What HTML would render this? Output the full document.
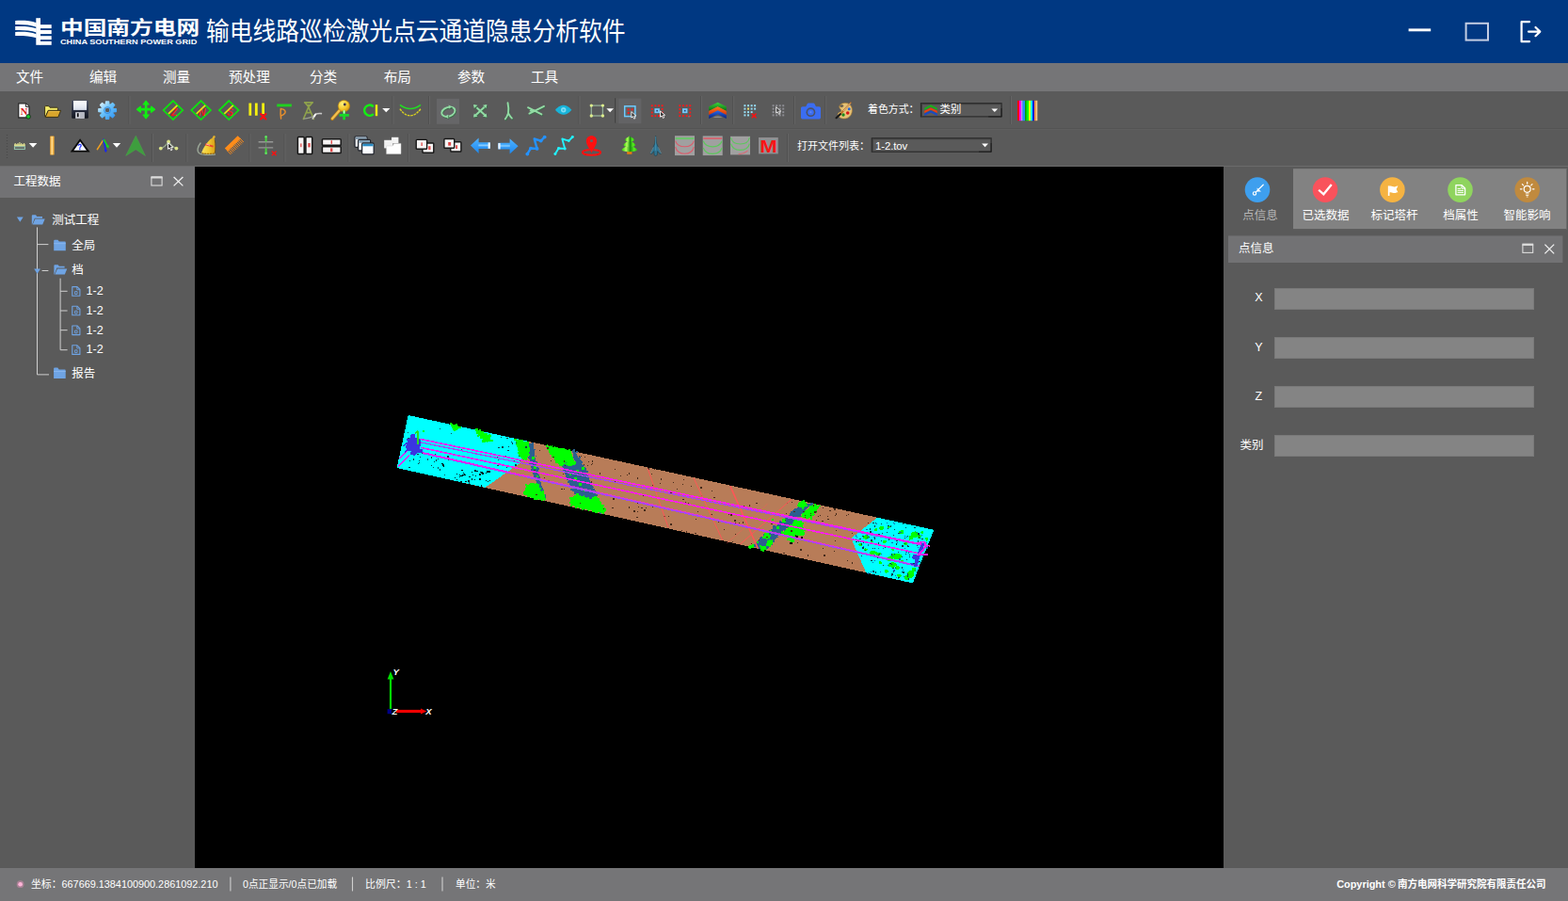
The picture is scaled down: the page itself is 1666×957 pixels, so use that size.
<!DOCTYPE html>
<html lang="zh-CN">
<head>
<meta charset="utf-8">
<title>输电线路巡检激光点云通道隐患分析软件</title>
<style>
html,body{margin:0;padding:0;background:#5a5a5a;}
body{width:1666px;height:957px;overflow:hidden;font-family:"Liberation Sans",sans-serif;color:#fff;}
#app{position:relative;width:1666px;height:957px;overflow:hidden;background:#5a5a5a;}
#app div,#app span,#app svg{box-sizing:border-box;}
.abs{position:absolute;}
.lb{position:absolute;display:block;line-height:1;overflow:hidden;white-space:nowrap;}
.lb .tt{position:absolute;left:1px;top:0.1em;color:#fff;white-space:nowrap;font-family:"Liberation Sans","Noto Sans CJK SC",sans-serif;transform-origin:0 0;}
.lt{position:absolute;white-space:nowrap;line-height:1;color:#fff;}
#titlebar{position:absolute;left:0;top:0;width:1666px;height:67px;background:#003882;}
#menubar{position:absolute;left:0;top:67px;width:1666px;height:30px;background:#757577;}
#tb1{position:absolute;left:0;top:97px;width:1666px;height:40px;background:#5a5a5a;border-bottom:1px solid #535353;}
#tb2{position:absolute;left:0;top:137px;width:1666px;height:40px;background:#5a5a5a;border-top:1px solid #5e5e5e;border-bottom:1px solid #6b6b6b;}
#tb1 svg.ic,#tb2 svg.ic{position:absolute;left:0;top:0;}
#left{position:absolute;left:0;top:177px;width:207px;height:745px;background:#5a5a5a;}
#left .hd{position:absolute;left:0;top:0;width:207px;height:33px;background:#727274;}
#view{position:absolute;left:207px;top:177px;width:1093px;height:745px;background:#000;}
#right{position:absolute;left:1300px;top:177px;width:366px;height:745px;background:#5a5a5a;}
#status{position:absolute;left:0;top:922px;width:1666px;height:35px;background:#757577;}

</style>
</head>
<body>
<div id="app">
<div id="titlebar">
<svg class="abs" style="left:10px;top:14px" width="52" height="40" viewBox="10 14 52 40">
<g fill="#fff">
<rect x="38.3" y="19.2" width="4.7" height="28.6"/>
<rect x="42.5" y="26.2" width="12.2" height="3.9"/>
<rect x="42.5" y="32" width="12.2" height="4.1"/>
<rect x="42.5" y="38.2" width="12.2" height="3.9"/>
<rect x="42.5" y="43.9" width="12.2" height="3.9"/>
<path d="M16.2 22 C24 21.6 32 21.8 38.8 24.2 L38.8 28.8 C32 26.2 24 25.8 16.2 26 Z"/>
<path d="M16.2 28.1 C24 27.7 32 27.9 38.8 30.3 L38.8 34.6 C32 32.2 24 31.8 16.2 32.1 Z"/>
<path d="M16.2 34 C24 33.6 32 33.8 38.8 36.3 L38.8 40.3 C32 38.2 24 37.8 16.2 38 Z"/>
</g></svg>
<span class="lb" style="left:62.7px;top:18px;width:150.2px;height:26.4px;font-size:20.3px"><span class="tt" style="font-weight:bold;transform:scaleX(1.217)">中国南方电网</span></span>
<span class="lb" style="left:63.1px;top:41.2px;width:148.2px;height:9px;font-size:6.9px"><span class="tt" style="font-weight:bold;transform:scaleX(1.33)">CHINA SOUTHERN POWER GRID</span></span>
<span class="lb" style="left:218.2px;top:17.3px;width:472.4px;height:36.1px;font-size:27.8px"><span class="tt" style="transform:scaleX(0.8906)">输电线路巡检激光点云通道隐患分析软件</span></span>
<svg class="abs" style="left:1490px;top:16px" width="160" height="36" viewBox="1490 16 160 36">
<rect x="1496.6" y="30.4" width="23.6" height="2.9" fill="#fff"/>
<rect x="1557.6" y="24.8" width="23.4" height="17.8" fill="none" stroke="#c3cde3" stroke-width="2"/>
<path d="M1625 23.2 H1616.6 V44.2 H1625" fill="none" stroke="#fff" stroke-width="2.2" stroke-linejoin="round" stroke-linecap="round"/>
<path d="M1624 33.6 H1636 M1631.5 29 L1636.3 33.6 L1631.5 38.2" fill="none" stroke="#fff" stroke-width="2.2" stroke-linecap="round" stroke-linejoin="round"/>
</svg>
</div>
<div id="menubar">
<span class="lb" style="left:16px;top:6.5px;width:31.1px;height:18.9px;font-size:14.6px"><span class="tt">文件</span></span>
<span class="lb" style="left:94px;top:6.5px;width:31.1px;height:18.9px;font-size:14.6px"><span class="tt">编辑</span></span>
<span class="lb" style="left:171.9px;top:6.5px;width:31.1px;height:18.9px;font-size:14.6px"><span class="tt">测量</span></span>
<span class="lb" style="left:242px;top:6.5px;width:45.7px;height:18.9px;font-size:14.6px"><span class="tt">预处理</span></span>
<span class="lb" style="left:328px;top:6.5px;width:31.1px;height:18.9px;font-size:14.6px"><span class="tt">分类</span></span>
<span class="lb" style="left:406.7px;top:6.5px;width:31.1px;height:18.9px;font-size:14.6px"><span class="tt">布局</span></span>
<span class="lb" style="left:485px;top:6.5px;width:31.1px;height:18.9px;font-size:14.6px"><span class="tt">参数</span></span>
<span class="lb" style="left:563px;top:6.5px;width:31.1px;height:18.9px;font-size:14.6px"><span class="tt">工具</span></span>
</div>
<div id="tb1">
<svg class="ic" width="1666" height="40" viewBox="0 97 1666 40">
<path d="M19.7 109.9H27.6L31 113.2V125H19.7Z" fill="#fff" stroke="#2c2c2c" stroke-width="1.3" stroke-linejoin="round"/><path d="M27.4 110V113.4H30.8" fill="#e8e8e8" stroke="#2c2c2c" stroke-width="1"/><text x="25.6" y="122.2" font-family="Liberation Serif, serif" font-weight="bold" font-size="10.5" fill="#d81818" text-anchor="middle">N</text><circle cx="30.1" cy="123.9" r="2.3" fill="#10c828" stroke="#1c2a1c" stroke-width="0.9"/>
<path d="M47.6 123.6V113.6Q47.6 112.6 48.6 112.6H51Q52 112.6 52.6 113.6L53 114.2H60.4Q61.4 114.2 61.4 115.2V117.4H51.4L48.4 124Z" fill="#f4ec6a" stroke="#3a3216" stroke-width="1"/><path d="M48.2 124.4L51.2 117.4H64.6L61.8 124.4Z" fill="#d9a62c" stroke="#3a3216" stroke-width="1" stroke-linejoin="round"/><path d="M51.8 118.4H63.2" stroke="#f0c44c" stroke-width="0.9"/>
<defs><linearGradient id="flg" x1="0" y1="0" x2="0" y2="1"><stop offset="0" stop-color="#fdfdff"/><stop offset="1" stop-color="#d9dfec"/></linearGradient><linearGradient id="fbg" x1="0" y1="0" x2="0" y2="1"><stop offset="0" stop-color="#4a5064"/><stop offset="0.5" stop-color="#2a3042"/><stop offset="1" stop-color="#12151e"/></linearGradient></defs>
<rect x="76.2" y="106.6" width="17.7" height="19.2" rx="1" fill="url(#fbg)"/><rect x="78" y="107" width="14.1" height="9.9" fill="url(#flg)"/><rect x="80.2" y="119.2" width="9.4" height="6.6" fill="#d4d6dc"/><rect x="85" y="119.2" width="4.6" height="6.6" fill="#b6b9c2"/><rect x="81.9" y="120.2" width="1.7" height="4" fill="#0a0a0e"/>
<defs><linearGradient id="gg" x1="0" y1="0" x2="1" y2="1"><stop offset="0" stop-color="#f4fcff"/><stop offset="0.45" stop-color="#6cc4fa"/><stop offset="1" stop-color="#2a8ef0"/></linearGradient></defs>
<path d="M112.66 107.91L115.54 107.91L115.78 111.03L117.21 111.62L119.58 109.59L121.61 111.62L119.58 113.99L120.17 115.42L123.29 115.66L123.29 118.54L120.17 118.78L119.58 120.21L121.61 122.58L119.58 124.61L117.21 122.58L115.78 123.17L115.54 126.29L112.66 126.29L112.42 123.17L110.99 122.58L108.62 124.61L106.59 122.58L108.62 120.21L108.03 118.78L104.91 118.54L104.91 115.66L108.03 115.42L108.62 113.99L106.59 111.62L108.62 109.59L110.99 111.62L112.42 111.03Z M117.1 117.1A3 3 0 1 0 111.1 117.1A3 3 0 1 0 117.1 117.1Z" fill="url(#gg)" fill-rule="evenodd" stroke="url(#gg)" stroke-width="1.5" stroke-linejoin="round"/>
<circle cx="114.1" cy="117.1" r="3.4" fill="none" stroke="#2e86e0" stroke-width="0.9"/>
<path d="M137 102V132" stroke="#515151" stroke-width="1"/><path d="M138 102V132" stroke="#646464" stroke-width="1"/>
<g fill="#12ee12" stroke="#12ee12" stroke-linejoin="round"><path d="M155.1 109V124M147.4 116.2H162.8" stroke-width="2.7" fill="none"/><path d="M155.1 107.2L158.2 111H152Z M155.1 125.8L158.2 122H152Z M145.4 116.2L149.4 113V119.4Z M164.6 116.2L160.6 113V119.4Z" stroke-width="1.1"/></g>
<path d="M183.9 107.1L194.20000000000002 117.1L183.9 127.1L173.6 117.1Z" fill="none" stroke="#0fe20f" stroke-width="1.8" stroke-linejoin="miter"/><text x="184.9" y="122.89999999999999" font-family="Liberation Sans, sans-serif" font-size="10.4" font-style="italic" font-weight="bold" fill="#f01818" text-anchor="middle">Z</text><path d="M179.0 120.89999999999999L188.4 111.89999999999999" stroke="#e8e010" stroke-width="1.7"/>
<path d="M213.6 107.1L223.9 117.1L213.6 127.1L203.29999999999998 117.1Z" fill="none" stroke="#0fe20f" stroke-width="1.8" stroke-linejoin="miter"/><text x="214.6" y="122.89999999999999" font-family="Liberation Sans, sans-serif" font-size="10.4" font-style="italic" font-weight="bold" fill="#f01818" text-anchor="middle">N</text><path d="M208.7 120.89999999999999L218.1 111.89999999999999" stroke="#e8e010" stroke-width="1.7"/>
<path d="M243.2 107.1L253.5 117.1L243.2 127.1L232.89999999999998 117.1Z" fill="none" stroke="#0fe20f" stroke-width="1.8" stroke-linejoin="miter"/><text x="244.2" y="122.89999999999999" font-family="Liberation Sans, sans-serif" font-size="10.4" font-style="italic" font-weight="bold" fill="#f01818" text-anchor="middle">S</text><path d="M238.29999999999998 120.89999999999999L247.7 111.89999999999999" stroke="#e8e010" stroke-width="1.7"/>
<path d="M265.8 109.4V122.8M272.3 109.4V122.8M279.6 109.4V121" stroke="#f6f010" stroke-width="2.8"/>
<path d="M277.0 121.1L282.4 126.5M282.4 121.1L277.0 126.5" stroke="#ff1010" stroke-width="2.1" stroke-linecap="round"/>
<path d="M294.2 111.9H309.9" stroke="#1fd21f" stroke-width="2.9"/><path d="M298.6 126C298 123 298 118.6 298.3 115.4C300.4 115.6 302.9 117 303.1 118.6C303.3 120.2 301 122 298.6 123" fill="none" stroke="#e88f2c" stroke-width="1.5" stroke-linecap="round" stroke-linejoin="round"/>
<path d="M323.6 108.9H332.3M324 109L327.8 113.6L333.4 126.4M332 109L327.8 113.6L322.4 126.4M326 111.6H330M325.4 119.6H330.4" fill="none" stroke="#8fa24c" stroke-width="1.6" stroke-linecap="round" stroke-linejoin="round"/><path d="M322.6 126.2C327 125.6 331.4 124.4 334.6 122.4" fill="none" stroke="#9aa090" stroke-width="1.2"/><path d="M332.2 126L334.8 121.6C336.8 120.6 339.4 120.4 341.4 120.6" fill="none" stroke="#c8c8c8" stroke-width="1.6" stroke-linecap="round"/><path d="M334 123.6L335.2 121.4" stroke="#ffffff" stroke-width="1.8" stroke-linecap="round"/>
<defs><radialGradient id="kg" cx="0.35" cy="0.3" r="0.8"><stop offset="0" stop-color="#fff27a"/><stop offset="0.6" stop-color="#f2c428"/><stop offset="1" stop-color="#c88a10"/></radialGradient></defs>
<path d="M361.6 116.4L353 126.2" stroke="#b87c14" stroke-width="3.6" stroke-linecap="round"/><path d="M361.6 116.2L353 126" stroke="#f0c050" stroke-width="2.2" stroke-linecap="round"/><circle cx="365.4" cy="112.6" r="6.2" fill="url(#kg)" stroke="#b8820c" stroke-width="0.6"/><circle cx="366.3" cy="111" r="1.4" fill="#3a3050"/><path d="M365.6 117.4V127.2M360.6 122.4H370.8" stroke="#18d828" stroke-width="2.7"/><path d="M365.6 117.2V120.6" stroke="#d8ffd8" stroke-width="1.6"/>
<path d="M396 112.6A5.6 5.6 0 1 0 396 121.8" fill="none" stroke="#14ee14" stroke-width="2.5" stroke-linecap="round"/><path d="M400 111.2V123.2" stroke="#f4ee12" stroke-width="2.4"/>
<path d="M406.2 115H414.4L410.29999999999995 119.2Z" fill="#fff"/>
<path d="M417 102V132" stroke="#515151" stroke-width="1"/><path d="M418 102V132" stroke="#646464" stroke-width="1"/>
<path d="M424.9 111.4C429 114.4 432.4 115.6 435.8 115.6C439.4 115.6 443 114.4 447 111.4" fill="none" stroke="#22dd22" stroke-width="1.5"/><path d="M424.9 115.6C428 120 431.6 122.8 435.8 122.8C440 122.8 443.8 120 447 115.6" fill="none" stroke="#d8d020" stroke-width="1.4" stroke-dasharray="2.6 0.9"/>
<path d="M455.5 102V132" stroke="#515151" stroke-width="1"/><path d="M456.5 102V132" stroke="#646464" stroke-width="1"/>
<rect x="464" y="104.8" width="24" height="27" fill="#666668"/>
<path d="M478.6 113.6C474 113.4 469.6 116.6 469.3 119.6C469.1 121.6 470.8 123.2 473.6 123.9 M474.6 123.8C479.2 124 483.2 121 483.4 117.8C483.5 116 482.2 114.4 479.6 113.8" fill="none" stroke="#3e6a4a" stroke-width="1.9" stroke-linecap="round" stroke-linejoin="round" transform="translate(0.7 0.9)"/><path d="M478.6 113.6C474 113.4 469.6 116.6 469.3 119.6C469.1 121.6 470.8 123.2 473.6 123.9 M474.6 123.8C479.2 124 483.2 121 483.4 117.8C483.5 116 482.2 114.4 479.6 113.8" fill="none" stroke="#92dba4" stroke-width="1.9" stroke-linecap="round" stroke-linejoin="round"/>
<path d="M476.6 111.4L480.4 113.6L477 115.6Z M476.4 126L472.6 123.9L476 121.8Z" fill="#3e6a4a" transform="translate(0.7 0.9)"/><path d="M476.6 111.4L480.4 113.6L477 115.6Z M476.4 126L472.6 123.9L476 121.8Z" fill="#92dba4"/>
<path d="M504.6 112.6L516 123 M516 112.6L504.6 123" fill="none" stroke="#3e6a4a" stroke-width="2.0" stroke-linecap="round" stroke-linejoin="round" transform="translate(0.7 0.9)"/><path d="M504.6 112.6L516 123 M516 112.6L504.6 123" fill="none" stroke="#92dba4" stroke-width="2.0" stroke-linecap="round" stroke-linejoin="round"/>
<path d="M503 111L507.4 111.8L503.8 115Z M517.4 111L513 111.8L516.6 115Z M503 124.4L507.4 123.8L503.8 120.4Z M517.4 124.4L513 123.8L516.6 120.4Z" fill="#3e6a4a" transform="translate(0.7 0.9)"/><path d="M503 111L507.4 111.8L503.8 115Z M517.4 111L513 111.8L516.6 115Z M503 124.4L507.4 123.8L503.8 120.4Z M517.4 124.4L513 123.8L516.6 120.4Z" fill="#92dba4"/>
<path d="M539.5 109.2C540.4 113 540.4 117 540 120.2 M540 120.2C539 123 538 125 536.8 126.4 M540 120.2C541.4 122.6 542.6 124.4 543.9 125.6" fill="none" stroke="#3e6a4a" stroke-width="1.9" stroke-linecap="round" stroke-linejoin="round" transform="translate(0.7 0.9)"/><path d="M539.5 109.2C540.4 113 540.4 117 540 120.2 M540 120.2C539 123 538 125 536.8 126.4 M540 120.2C541.4 122.6 542.6 124.4 543.9 125.6" fill="none" stroke="#92dba4" stroke-width="1.9" stroke-linecap="round" stroke-linejoin="round"/>
<path d="M561 114.2L575.4 121.4 M562.4 120.6L578 112.8 M563.6 117.6L568 117.2" fill="none" stroke="#3e6a4a" stroke-width="1.9" stroke-linecap="round" stroke-linejoin="round" transform="translate(0.7 0.9)"/><path d="M561 114.2L575.4 121.4 M562.4 120.6L578 112.8 M563.6 117.6L568 117.2" fill="none" stroke="#92dba4" stroke-width="1.9" stroke-linecap="round" stroke-linejoin="round"/>
<path d="M590 116.8C593.4 112.6 596.6 111.8 598.7 111.8C601 111.8 604.2 112.8 607.4 116.8C604.2 120.8 601 121.8 598.7 121.8C596.6 121.8 593.4 121 590 116.8Z" fill="#17b4da"/><circle cx="598.7" cy="116.8" r="2.7" fill="#7fdcf4"/><circle cx="598.7" cy="116.8" r="1.1" fill="#38bce0"/>
<path d="M615 102V132" stroke="#515151" stroke-width="1"/><path d="M616 102V132" stroke="#646464" stroke-width="1"/>
<rect x="628.3" y="112.1" width="12.1" height="10.9" fill="none" stroke="#94b098" stroke-width="1.3"/>
<circle cx="628.3" cy="112.1" r="1.7" fill="#dcec8c"/>
<circle cx="640.4" cy="112.1" r="1.7" fill="#dcec8c"/>
<circle cx="628.3" cy="123" r="1.7" fill="#dcec8c"/>
<circle cx="640.4" cy="123" r="1.7" fill="#dcec8c"/>
<path d="M644.4 115.2H652L648.2 119.2Z" fill="#fff"/>
<path d="M654 104.2V130.6" stroke="#3a3a3a" stroke-width="1.2"/><path d="M655.1 104.2V130.6" stroke="#6a6a6a" stroke-width="1"/>
<rect x="657" y="104.6" width="24.4" height="26.6" fill="#636365"/>
<rect x="663.7" y="112.8" width="11.2" height="10.8" fill="none" stroke="#6ccaff" stroke-width="1.5"/>
<rect x="666.7" y="115.4" width="2" height="2" fill="#ff1818"/>
<rect x="670.6" y="115.4" width="2" height="2" fill="#ff1818"/>
<rect x="666.7" y="118.9" width="2" height="2" fill="#ff1818"/>
<g transform="translate(670.8 118.6) scale(0.84)"><path d="M0 0 L0 7.6 L1.9 6 L3.4 9 L5 8.3 L3.6 5.4 L6 5.2 Z" fill="#3a3a3a" stroke="#f4f4f4" stroke-width="1.1" stroke-linejoin="round"/></g>
<rect x="691.80" y="111.30" width="1.9" height="1.9" fill="#ff1818"/><rect x="691.80" y="114.93" width="1.9" height="1.9" fill="#ff1818"/><rect x="691.80" y="118.56" width="1.9" height="1.9" fill="#ff1818"/><rect x="691.80" y="122.19" width="1.9" height="1.9" fill="#ff1818"/><rect x="695.43" y="111.30" width="1.9" height="1.9" fill="#ff1818"/><rect x="695.43" y="122.19" width="1.9" height="1.9" fill="#ff1818"/><rect x="699.06" y="111.30" width="1.9" height="1.9" fill="#ff1818"/><rect x="699.06" y="122.19" width="1.9" height="1.9" fill="#ff1818"/><rect x="702.69" y="111.30" width="1.9" height="1.9" fill="#ff1818"/><rect x="702.69" y="114.93" width="1.9" height="1.9" fill="#ff1818"/><rect x="702.69" y="118.56" width="1.9" height="1.9" fill="#ff1818"/><rect x="702.69" y="122.19" width="1.9" height="1.9" fill="#ff1818"/><rect x="695.45" y="115.15" width="5.4" height="5" fill="#74c8fc"/><rect x="697.35" y="116.85" width="1.6" height="1.6" fill="#30406c"/>
<g transform="translate(701.5 117.9) scale(0.84)"><path d="M0 0 L0 7.6 L1.9 6 L3.4 9 L5 8.3 L3.6 5.4 L6 5.2 Z" fill="#3a3a3a" stroke="#f4f4f4" stroke-width="1.1" stroke-linejoin="round"/></g>
<rect x="721.40" y="111.30" width="1.9" height="1.9" fill="#ff1818"/><rect x="721.40" y="114.93" width="1.9" height="1.9" fill="#ff1818"/><rect x="721.40" y="118.56" width="1.9" height="1.9" fill="#ff1818"/><rect x="721.40" y="122.19" width="1.9" height="1.9" fill="#ff1818"/><rect x="725.03" y="111.30" width="1.9" height="1.9" fill="#ff1818"/><rect x="725.03" y="122.19" width="1.9" height="1.9" fill="#ff1818"/><rect x="728.66" y="111.30" width="1.9" height="1.9" fill="#ff1818"/><rect x="728.66" y="122.19" width="1.9" height="1.9" fill="#ff1818"/><rect x="732.29" y="111.30" width="1.9" height="1.9" fill="#ff1818"/><rect x="732.29" y="114.93" width="1.9" height="1.9" fill="#ff1818"/><rect x="732.29" y="118.56" width="1.9" height="1.9" fill="#ff1818"/><rect x="732.29" y="122.19" width="1.9" height="1.9" fill="#ff1818"/><rect x="725.04" y="115.15" width="5.4" height="5" fill="#74c8fc"/><rect x="726.95" y="116.85" width="1.6" height="1.6" fill="#30406c"/>
<rect x="731.4" y="123.2" width="1.2" height="1.2" fill="#8a8a8a"/>
<path d="M744.5 102V132" stroke="#515151" stroke-width="1"/><path d="M745.5 102V132" stroke="#646464" stroke-width="1"/>
<defs><linearGradient id="lg1" x1="0" y1="0" x2="0" y2="1"><stop offset="0" stop-color="#3cd83c"/><stop offset="1" stop-color="#0c6c10"/></linearGradient><linearGradient id="lg2" x1="0" y1="0" x2="0" y2="1"><stop offset="0" stop-color="#ff7a20"/><stop offset="1" stop-color="#d83408"/></linearGradient><linearGradient id="lg3" x1="0" y1="0" x2="0" y2="1"><stop offset="0" stop-color="#2a6cf0"/><stop offset="1" stop-color="#08207c"/></linearGradient></defs>
<path d="M753.2 121.7L762.6 117.1L771.8 121.7V125.9L762.6 121.3L753.2 125.9Z" fill="url(#lg3)"/><path d="M753.2 117.5L762.6 112.9L771.8 117.5V121.9L762.6 117.3L753.2 121.9Z" fill="url(#lg2)"/><path d="M753.2 113.3L762.6 108.7L771.8 113.3V117.7L762.6 113.1L753.2 117.7Z" fill="url(#lg1)"/><path d="M757.4 124.4Q762.6 122.4 767.8 124.4Q762.6 125.6 757.4 124.4Z" fill="#8a8a8a"/>
<path d="M778.7 102V132" stroke="#515151" stroke-width="1"/><path d="M779.7 102V132" stroke="#646464" stroke-width="1"/>
<rect x="790.4" y="111.2" width="2" height="2" fill="#96dcf4"/>
<rect x="790.4" y="114.6" width="2" height="2" fill="#96dcf4"/>
<rect x="790.4" y="118.1" width="2" height="2" fill="#96dcf4"/>
<rect x="790.4" y="121.4" width="2" height="2" fill="#96dcf4"/>
<rect x="794.0" y="111.2" width="2" height="2" fill="#96dcf4"/>
<rect x="794.0" y="114.6" width="2" height="2" fill="#e8e070"/>
<rect x="794.0" y="118.1" width="2" height="2" fill="#96dcf4"/>
<rect x="794.0" y="121.4" width="2" height="2" fill="#96dcf4"/>
<rect x="797.6" y="111.2" width="2" height="2" fill="#96dcf4"/>
<rect x="797.6" y="114.6" width="2" height="2" fill="#96dcf4"/>
<rect x="797.6" y="118.1" width="2" height="2" fill="#96dcf4"/>
<rect x="801.1" y="111.2" width="2" height="2" fill="#96dcf4"/>
<rect x="801.1" y="114.6" width="2" height="2" fill="#96dcf4"/>
<path d="M799.3000000000001 121.0L803.1 124.80000000000001M803.1 121.0L799.3000000000001 124.80000000000001" stroke="#ff1010" stroke-width="1.6" stroke-linecap="round"/>
<rect x="820.6" y="111.2" width="2" height="2" fill="#8c8c92"/>
<rect x="820.6" y="114.6" width="2" height="2" fill="#8c8c92"/>
<rect x="820.6" y="118.1" width="2" height="2" fill="#8c8c92"/>
<rect x="820.6" y="121.4" width="2" height="2" fill="#8c8c92"/>
<rect x="824.2" y="111.2" width="2" height="2" fill="#8c8c92"/>
<rect x="824.2" y="114.6" width="2" height="2" fill="#8c8c92"/>
<rect x="824.2" y="118.1" width="2" height="2" fill="#8c8c92"/>
<rect x="824.2" y="121.4" width="2" height="2" fill="#8c8c92"/>
<rect x="827.7" y="111.2" width="2" height="2" fill="#8c8c92"/>
<rect x="827.7" y="114.6" width="2" height="2" fill="#8c8c92"/>
<rect x="827.7" y="118.1" width="2" height="2" fill="#8c8c92"/>
<rect x="827.7" y="121.4" width="2" height="2" fill="#8c8c92"/>
<rect x="831.2" y="111.2" width="2" height="2" fill="#8c8c92"/>
<rect x="831.2" y="114.6" width="2" height="2" fill="#8c8c92"/>
<rect x="831.2" y="118.1" width="2" height="2" fill="#8c8c92"/>
<rect x="831.2" y="121.4" width="2" height="2" fill="#8c8c92"/>
<g transform="translate(824.6 113.6) scale(0.86)"><path d="M0 0 L0 7.6 L1.9 6 L3.4 9 L5 8.3 L3.6 5.4 L6 5.2 Z" fill="#4a4a4a" stroke="#e8e8e8" stroke-width="1.1" stroke-linejoin="round"/></g>
<path d="M843.5 102V132" stroke="#515151" stroke-width="1"/><path d="M844.5 102V132" stroke="#646464" stroke-width="1"/>
<path d="M852.6 113.2H856.2L857.6 110.4Q858 109.6 859 109.6H864.2Q865.2 109.6 865.6 110.4L867 113.2H870.4Q872 113.2 872 114.8V124.8Q872 126.4 870.4 126.4H852.6Q851 126.4 851 124.8V114.8Q851 113.2 852.6 113.2Z" fill="#3b6df2"/><circle cx="861.4" cy="119.2" r="4.9" fill="#4a5268"/><circle cx="861.4" cy="119.2" r="3.3" fill="#3b6df2"/><circle cx="861.4" cy="119.2" r="1.1" fill="#5a84f6"/>
<path d="M876.7 102V132" stroke="#515151" stroke-width="1"/><path d="M877.7 102V132" stroke="#646464" stroke-width="1"/>
<path d="M897 109.4C902 109 905.6 112.4 905.4 117.4C905.2 122.6 901.4 126.2 896.4 126C892.4 125.8 890 123.6 890.2 121.2C890.4 119.4 892.4 119.4 893.6 118.4C894.6 117.4 893 116 892 114.4C891 112.4 893.4 109.8 897 109.4Z" fill="#e6c276" stroke="#a87c34" stroke-width="0.7"/><ellipse cx="894.2" cy="112.6" rx="1.9" ry="1.3" fill="#5a5a5a" stroke="#a87c34" stroke-width="0.5"/><circle cx="902.2" cy="115.8" r="1.5" fill="#2a68d8"/><circle cx="900.7" cy="120" r="1.8" fill="#d81818"/><circle cx="896" cy="122" r="1.7" fill="#1c8a1c"/><path d="M903.8 109.2L892.6 121.6" stroke="#b86a20" stroke-width="1.7" stroke-linecap="round"/><path d="M903.6 109.6L896 118" stroke="#f4e4c4" stroke-width="0.7"/><path d="M892.8 121.2L888.6 125.2" stroke="#1a1a1a" stroke-width="2.2" stroke-linecap="round"/>
<rect x="978.5" y="109.7" width="85.6" height="14.2" fill="#5a5a5a" stroke="#2a2a2a" stroke-width="1.2"/><path d="M979.4 123.4V110.6H1063.4" fill="none" stroke="#3c3c3c" stroke-width="1"/>
<path d="M982.2 114.8L989 111.2L995.8 114.8V117L989 113.6L982.2 117Z" fill="#18b018"/><path d="M982.2 117.8L989 114.4L995.8 117.8V120L989 116.6L982.2 120Z" fill="#f04010"/><path d="M982.2 120.8L989 117.4L995.8 120.8V123L989 119.6L982.2 123Z" fill="#1848c8"/>
<path d="M1053.4 115.4H1060.2L1056.8000000000002 119Z" fill="#fff"/>
<path d="M1050.2 123.9H1064.1V115" fill="none" stroke="#1e1e1e" stroke-width="1"/>
<path d="M1073.5 102V132" stroke="#515151" stroke-width="1"/><path d="M1074.5 102V132" stroke="#646464" stroke-width="1"/>
<rect x="1081" y="106.8" width="2.05" height="21.4" fill="#ff0000"/>
<rect x="1083" y="106.8" width="2.05" height="21.4" fill="#ff00ff"/>
<rect x="1085" y="106.8" width="1.6500000000000001" height="21.4" fill="#a8a0ff"/>
<rect x="1086.6" y="106.8" width="2.4499999999999997" height="21.4" fill="#1e90ff"/>
<rect x="1089" y="106.8" width="1.6500000000000001" height="21.4" fill="#00a000"/>
<rect x="1090.6" y="106.8" width="2.4499999999999997" height="21.4" fill="#00ff00"/>
<rect x="1093" y="106.8" width="2.05" height="21.4" fill="#ffff00"/>
<rect x="1095" y="106.8" width="2.05" height="21.4" fill="#00ffff"/>
<rect x="1097" y="106.8" width="1.75" height="21.4" fill="#0000e8"/>
<rect x="1099" y="106.8" width="1.55" height="21.4" fill="#ff8c3c"/>
<rect x="1100.5" y="106.8" width="1.75" height="21.4" fill="#ffcc88"/>
</svg>
<span class="lb" style="left:920.6px;top:13.2px;width:56.5px;height:14.9px;font-size:11.4px"><span class="tt" style="transform:scaleX(0.956)">着色方式：</span></span>
<span class="lb" style="left:997.6px;top:13.2px;width:24.9px;height:14.9px;font-size:11.4px"><span class="tt">类别</span></span>
</div>
<div id="tb2">
<svg class="ic" style="top:-1px" width="1666" height="40" viewBox="0 137 1666 40">
<path d="M7.5 143V168" stroke="#484848" stroke-width="1.1" stroke-dasharray="1.1 1.9"/>
<rect x="15" y="153.2" width="11.8" height="2.2" fill="#dcdc90"/><path d="M16.2 153.4V151.9M19 153.4V151.9M20.9 153.4V151M22.8 153.4V151.9M25.6 153.4V151.9" stroke="#dcdc90" stroke-width="1.1"/><rect x="15.4" y="155.8" width="11" height="2.6" fill="none" stroke="#9accb4" stroke-width="1"/>
<path d="M30.8 152H39.4L35.1 156.8Z" fill="#fff"/>
<rect x="53.2" y="144.6" width="4.4" height="20" rx="0.6" fill="#f0aa38"/><rect x="54.4" y="145" width="1.8" height="19.2" fill="#ffd98a"/>
<path d="M85.1 148.8L76.6 160.6H93.8Z" fill="#f4f8ff" stroke="#0a0a0a" stroke-width="1.9" stroke-linejoin="miter"/><path d="M83.2 154.4C83.6 153.2 85.8 153 86.2 154.4C86.5 155.6 84.8 156 84.8 157.2" fill="none" stroke="#2030ff" stroke-width="1.2" stroke-linecap="round"/><rect x="84.2" y="158" width="1.2" height="1.2" fill="#2030ff"/>
<circle cx="110.6" cy="155.4" r="7.6" fill="none" stroke="#6a5a52" stroke-width="0.7" stroke-dasharray="1 1.4"/><path d="M109.8 148.6L103.4 158.6" stroke="#f0a020" stroke-width="1.6" stroke-linecap="round"/><path d="M110 148.2L112.4 160.4" stroke="#1828f0" stroke-width="1.7" stroke-linecap="round"/><path d="M112.4 162.2L110.9 159.2L113.8 158.8Z" fill="#1828f0"/><path d="M110.6 148.6L114.6 155.8" stroke="#10d820" stroke-width="1.7" stroke-linecap="round"/><path d="M115.6 157.6L112.6 155.6L115.4 153.8Z" fill="#10d820"/>
<path d="M119.8 152H128.2L124.0 156.8Z" fill="#fff"/>
<path d="M144.3 144.2L154.4 165.4L144.3 158.8L133.7 165.4Z" fill="#3e9e3e" stroke="#4aa84a" stroke-width="0.5"/>
<path d="M161.5 142V172" stroke="#515151" stroke-width="1"/><path d="M162.5 142V172" stroke="#646464" stroke-width="1"/>
<path d="M170.8 157.6C174 156.8 177 153.6 179.1 150.4C181.4 153.6 184.4 156.8 187.4 157.6" fill="none" stroke="#9cb090" stroke-width="1.2"/>
<circle cx="179.1" cy="150.4" r="1.9" fill="#dce488"/>
<circle cx="170.8" cy="157.6" r="1.9" fill="#dce488"/>
<circle cx="187.4" cy="157.6" r="1.9" fill="#dce488"/>
<g transform="translate(178.5 151.6) scale(0.9)"><path d="M0 0 L0 7.6 L1.9 6 L3.4 9 L5 8.3 L3.6 5.4 L6 5.2 Z" fill="#3a3a3a" stroke="#f4f4f4" stroke-width="1.1" stroke-linejoin="round"/></g>
<path d="M198 142V172" stroke="#515151" stroke-width="1"/><path d="M199 142V172" stroke="#646464" stroke-width="1"/>
<defs><linearGradient id="brg" x1="0" y1="0" x2="1" y2="0"><stop offset="0" stop-color="#f6e060"/><stop offset="0.5" stop-color="#f4cc30"/><stop offset="1" stop-color="#d89c18"/></linearGradient></defs>
<path d="M213 152C209.8 156 208.8 160.6 212 163C215.4 164.8 222 164.6 228.4 164" fill="none" stroke="#9ca898" stroke-width="1.3" stroke-linecap="round"/><path d="M227.6 145.2L225.8 148.4" stroke="#e0b030" stroke-width="2.4" stroke-linecap="round"/><path d="M224.2 147.2C220 151 215.8 157 214 162.4C218 163.6 224 163.8 228.2 162.8C229 158 229 152.6 228 148.2Z" fill="url(#brg)"/><path d="M228.3 149C229.2 153.4 229 158.6 228.2 162.6" fill="none" stroke="#6a4a10" stroke-width="0.8"/><path d="M218.2 153.2L226.6 155.6" stroke="#ee4630" stroke-width="2"/><path d="M219 153L223 154.2" stroke="#ffd8c8" stroke-width="0.8"/><path d="M214.6 162.6C218.6 163.6 224 163.6 228 162.8" fill="none" stroke="#a06c10" stroke-width="1.3" stroke-dasharray="1.8 1"/>
<path d="M238.8 157.6L252.6 144.2L255.8 147.2L242 160.8Z" fill="#ff8c1a"/>
<path d="M241.6 160.0L245.4 164.0" stroke="#ff8c1a" stroke-width="1.0"/>
<path d="M242.9 158.7L246.7 162.7" stroke="#ff8c1a" stroke-width="1.0"/>
<path d="M244.3 157.4L248.1 161.4" stroke="#ff8c1a" stroke-width="1.0"/>
<path d="M245.6 156.1L249.4 160.1" stroke="#ff8c1a" stroke-width="1.0"/>
<path d="M247.0 154.8L250.8 158.8" stroke="#ff8c1a" stroke-width="1.0"/>
<path d="M248.3 153.5L252.1 157.5" stroke="#ff8c1a" stroke-width="1.0"/>
<path d="M249.6 152.2L253.4 156.2" stroke="#ff8c1a" stroke-width="1.0"/>
<path d="M251.0 150.9L254.8 154.9" stroke="#ff8c1a" stroke-width="1.0"/>
<path d="M252.3 149.6L256.1 153.6" stroke="#ff8c1a" stroke-width="1.0"/>
<path d="M253.7 148.3L257.5 152.3" stroke="#ff8c1a" stroke-width="1.0"/>
<path d="M255.0 147.0L258.8 151.0" stroke="#ff8c1a" stroke-width="1.0"/>
<path d="M265 142V172" stroke="#515151" stroke-width="1"/><path d="M266 142V172" stroke="#646464" stroke-width="1"/>
<path d="M274.6 150.7H290.2M274.6 156.9H290.2" stroke="#969896" stroke-width="1.4"/><path d="M282.6 145.2V150.4M282.6 157.2V163.4" stroke="#48d040" stroke-width="2"/><circle cx="282.6" cy="145.2" r="1.2" fill="#60e860"/><circle cx="282.6" cy="162.8" r="1.2" fill="#60e860"/><path d="M282.6 151.8V156" stroke="#6a8a6a" stroke-width="1"/>
<path d="M289.3 160.9L293.09999999999997 164.70000000000002M293.09999999999997 160.9L289.3 164.70000000000002" stroke="#ff1010" stroke-width="1.4" stroke-linecap="round"/>
<path d="M302 142V172" stroke="#515151" stroke-width="1"/><path d="M303 142V172" stroke="#646464" stroke-width="1"/>
<rect x="316.4" y="145.6" width="6.8" height="18.0" rx="0.8" fill="#f6f4f4" stroke="#161616" stroke-width="1.5"/><rect x="319.2" y="152.4" width="1.3" height="3.8" fill="#e04848"/>
<rect x="324.9" y="145.6" width="6.8" height="18.0" rx="0.8" fill="#f6f4f4" stroke="#161616" stroke-width="1.5"/><rect x="327.3" y="152" width="2.4" height="4.4" fill="#e04848"/>
<rect x="342.4" y="147.8" width="19.8" height="6.4" rx="0.8" fill="#f6f4f4" stroke="#161616" stroke-width="1.5"/><rect x="351.6" y="149.2" width="1.4" height="3.6" fill="#e04848"/>
<rect x="342.4" y="155.8" width="19.8" height="6.8" rx="0.8" fill="#f6f4f4" stroke="#161616" stroke-width="1.5"/><rect x="351" y="157.4" width="2.4" height="3.8" fill="#e04848"/>
<path d="M370 142V172" stroke="#515151" stroke-width="1"/><path d="M371 142V172" stroke="#646464" stroke-width="1"/>
<rect x="377" y="144.8" width="13.0" height="11.6" rx="1.2" fill="#fafcff" stroke="#23262e" stroke-width="1.3"/><rect x="377.7" y="145.5" width="11.6" height="2.6" fill="#8298aa"/>
<rect x="380.6" y="148.4" width="13.0" height="11.6" rx="1.2" fill="#fafcff" stroke="#23262e" stroke-width="1.3"/><rect x="381.3" y="149.1" width="11.6" height="2.6" fill="#7c9cb4"/>
<rect x="384.6" y="152" width="12.6" height="11.8" rx="1.2" fill="#fafcff" stroke="#23262e" stroke-width="1.3"/><rect x="385.3" y="152.7" width="11.2" height="2.6" fill="#2a8cc4"/>
<rect x="416" y="145.8" width="7.4" height="6.4" fill="#f4f4f4"/><rect x="408.2" y="148.8" width="9.2" height="8.6" fill="#f0f0f0"/><path d="M410.6 163.4V155H417.2L418.6 152.4H426V163.4Z" fill="#fefefe" stroke="#cfcfcf" stroke-width="0.5"/>
<path d="M433.6 142V172" stroke="#515151" stroke-width="1"/><path d="M434.6 142V172" stroke="#646464" stroke-width="1"/>
<rect x="449" y="152" width="11.8" height="10.2" rx="0.8" fill="#f6f4f4" stroke="#161616" stroke-width="1.4"/><rect x="455.2" y="155.2" width="2.3" height="3.8" fill="#e04848"/>
<rect x="442.2" y="148.4" width="11.4" height="9.8" rx="0.8" fill="#f6f4f4" stroke="#161616" stroke-width="1.4"/><rect x="447.5" y="151.4" width="1.3" height="3.6" fill="#e04848"/>
<rect x="478.8" y="150.8" width="11.1" height="10.2" rx="0.8" fill="#f6f4f4" stroke="#161616" stroke-width="1.4"/><rect x="484.2" y="154.2" width="1.8" height="3.8" fill="#e04848"/>
<rect x="471.9" y="147.5" width="10.8" height="9.8" rx="0.8" fill="#f6f4f4" stroke="#161616" stroke-width="1.4"/><rect x="476.2" y="151" width="2.9" height="3.7" fill="#e04848"/>
<defs><linearGradient id="ba" x1="0" y1="0" x2="0" y2="1"><stop offset="0" stop-color="#2f9ef8"/><stop offset="0.5" stop-color="#8ccfff"/><stop offset="1" stop-color="#1e8af0"/></linearGradient><linearGradient id="bh" x1="0" y1="0" x2="0" y2="1"><stop offset="0" stop-color="#4eb2ff"/><stop offset="1" stop-color="#1e88ee"/></linearGradient></defs>
<path d="M500 154.6L508.6 146.6V151.2H520.8V158H508.6V163Z" fill="url(#bh)"/><rect x="508.4" y="152.4" width="12.4" height="4" fill="url(#ba)"/><rect x="518.6" y="151.4" width="2.2" height="6.4" fill="#eef6ff"/>
<path d="M550.6 155.2L541.6 147.2V151.8H529.4V158.6H541.6V163.6Z" fill="url(#bh)"/><rect x="529.4" y="153" width="12.4" height="4" fill="url(#ba)"/><rect x="529.4" y="152" width="2.2" height="6.4" fill="#eef6ff"/>
<path d="M560.3 163.6L563.9 157.5L570.6 157.9L567.7 147.5L574.7 149.6L578.7 145.5" fill="none" stroke="#2492ff" stroke-width="2.4" stroke-linejoin="round" stroke-linecap="round"/><circle cx="560.3" cy="163.6" r="1.87" fill="#2492ff"/><circle cx="563.9" cy="157.5" r="1.87" fill="#2492ff"/><circle cx="570.6" cy="157.9" r="1.87" fill="#2492ff"/><circle cx="574.7" cy="149.6" r="1.87" fill="#2492ff"/><circle cx="578.7" cy="145.5" r="1.87" fill="#2492ff"/>
<path d="M589.9 163.6L593.5 157.5L600.2 157.9L597.3 147.5L604.3 149.6L608.3 145.5" fill="none" stroke="#22f2ff" stroke-width="1.9" stroke-linejoin="round" stroke-linecap="round"/><circle cx="589.9" cy="163.6" r="1.48" fill="#22f2ff"/><circle cx="593.5" cy="157.5" r="1.48" fill="#22f2ff"/><circle cx="600.2" cy="157.9" r="1.48" fill="#22f2ff"/><circle cx="604.3" cy="149.6" r="1.48" fill="#22f2ff"/><circle cx="608.3" cy="145.5" r="1.48" fill="#22f2ff"/>
<ellipse cx="628.5" cy="161.8" rx="9.6" ry="2.9" fill="none" stroke="#ff1010" stroke-width="2"/><path d="M628.5 162.2C626.4 158 622.9 153.6 622.9 149.8C622.9 146.6 625.4 144.2 628.5 144.2C631.6 144.2 634.1 146.6 634.1 149.8C634.1 153.6 630.6 158 628.5 162.2Z" fill="#ff1010" stroke="#5a5a5a" stroke-width="0.8"/><path d="M628.5 162.2C626.4 158 622.9 153.6 622.9 149.8C622.9 146.6 625.4 144.2 628.5 144.2C631.6 144.2 634.1 146.6 634.1 149.8C634.1 153.6 630.6 158 628.5 162.2Z" fill="#ff1010"/><circle cx="628.5" cy="149.4" r="1.5" fill="#6a6262"/>
<defs><linearGradient id="tg" x1="0" y1="0" x2="1" y2="0"><stop offset="0" stop-color="#30c808"/><stop offset="0.28" stop-color="#b4ff5c"/><stop offset="0.56" stop-color="#168c10"/><stop offset="0.8" stop-color="#58ee20"/><stop offset="1" stop-color="#30c010"/></linearGradient></defs>
<rect x="666.2" y="160.4" width="5.2" height="3.4" fill="#e87c10"/><path d="M668.8 153.4C670.4 155.20000000000002 676.9 157.2 676.9 159.0Q676.9 161.0 668.8 161.2Q660.6 161.0 660.6 159.0C660.6 157.2 667.1999999999999 155.20000000000002 668.8 153.4Z" fill="url(#tg)"/><path d="M668.8 148.4C670.4 150.20000000000002 675.2 152.2 675.2 154.0Q675.2 156.0 668.8 156.2Q662.5 156.0 662.5 154.0C662.5 152.2 667.1999999999999 150.20000000000002 668.8 148.4Z" fill="url(#tg)"/><path d="M668.8 144.3C670.4 146.10000000000002 673.8 146.79999999999998 673.8 148.6Q673.8 150.6 668.8 150.79999999999998Q664.2 150.6 664.2 148.6C664.2 146.79999999999998 667.1999999999999 146.10000000000002 668.8 144.3Z" fill="url(#tg)"/>
<path d="M696.7 144.4L697.6 152.2L699.6 156.8L702.8 163L700.8 163.4L698.6 160.6L698.2 164.8L696.7 165.6L695.2 164.8L694.8 160.6L692.6 163.4L690.8 163L693.8 156.8L695.8 152.2Z" fill="#2f7492" stroke="#1f4450" stroke-width="0.7"/><path d="M694.2 156.4L691 163M699.4 156.4L702.6 163" stroke="#8a9498" stroke-width="0.7"/><path d="M696.7 145V160" stroke="#4a9cbc" stroke-width="0.7"/>
<rect x="717" y="144.2" width="21" height="20.9" fill="#a0a0a0"/><rect x="717.6" y="146" width="19.8" height="2.1" fill="#6cc46c"/><path d="M717.6 149.6C719.2 154.4 723.4 155.8 727.5 155.8C731.6 155.8 735.8 154.4 737.4 149.6M717.6 156C719.2 161.6 723.4 163.2 727.5 163.2C731.6 163.2 735.8 161.6 737.4 156" fill="none" stroke="#dc5c6c" stroke-width="1.1"/>
<rect x="746.7" y="144.4" width="21" height="20.7" fill="#a0a0a0"/><rect x="747.3" y="146" width="19.8" height="2" fill="#d06a74"/><path d="M747.3 149.8C748.9 154.6 752.6 155.8 757.2 155.8C761.8 155.8 765.5 154.6 767.1 149.8M747.3 157C748.9 162 752.6 163.4 757.2 163.4C761.8 163.4 765.5 162 767.1 157" fill="none" stroke="#5cc85c" stroke-width="1.15"/>
<rect x="776" y="144.8" width="21" height="19.6" fill="#a0a0a0"/><path d="M776.6 146C777.6 151.6 781.6 153 786.5 153C791.4 153 795.4 151.6 796.4 146M776.6 152.6C778 158 781.6 159.4 786.5 159.4C791.4 159.4 795 158 796.4 152.6" fill="none" stroke="#5cc85c" stroke-width="1.15"/><path d="M784.6 163.6C789 163.2 792.4 162 794.6 159.8" fill="none" stroke="#d86a76" stroke-width="1.1"/>
<rect x="806" y="146" width="20.8" height="17.4" fill="#909092"/><text x="816.4" y="162.2" font-family="Liberation Sans, sans-serif" font-weight="bold" font-size="19" fill="#fa1414" text-anchor="middle" textLength="18.4" lengthAdjust="spacingAndGlyphs">M</text>
<path d="M836.5 142V172" stroke="#515151" stroke-width="1"/><path d="M837.5 142V172" stroke="#646464" stroke-width="1"/>
<rect x="926.3" y="146.8" width="126.8" height="14.4" fill="#5a5a5a" stroke="#2a2a2a" stroke-width="1.2"/><path d="M927.2 160.6V147.7H1052.4" fill="none" stroke="#3c3c3c" stroke-width="1"/>
<path d="M1043.2 152.6H1050L1046.6 156.2Z" fill="#fff"/>
<path d="M1040 161.2H1053.1V152" fill="none" stroke="#1e1e1e" stroke-width="1"/>
</svg>
<span class="lb" style="left:845.8px;top:10.6px;width:79px;height:14.9px;font-size:11.4px"><span class="tt" style="transform:scaleX(0.965)">打开文件列表：</span></span>
<div class="lt" style="left:930px;top:11.9px;font-size:11.4px;letter-spacing:-0.1px">1-2.tov</div>
</div>
<div id="left">
<div class="hd"></div>
<span class="lb" style="left:13.4px;top:8.9px;width:51.9px;height:16.2px;font-size:12.5px"><span class="tt">工程数据</span></span>
<svg class="abs" style="left:0;top:0" width="207" height="240" viewBox="0 177 207 240">
<rect x="160.9" y="188.6" width="11.2" height="8.4" fill="none" stroke="#dcdcdc" stroke-width="1.1"/><rect x="160.4" y="187.2" width="12.2" height="2.2" fill="#dcdcdc"/>
<path d="M184.6 188L194.4 197.4M194.4 188L184.6 197.4" stroke="#f0f0f0" stroke-width="1.3"/>
<path d="M39.5 241.4V397.9H52M39.5 259.6H51.4M44.6 287.5H51.4" fill="none" stroke="#cfcfcf" stroke-width="1"/>
<path d="M64.1 295.6V371.7H71.6M64.1 309.3H71.6M64.1 330H71.6M64.1 350.7H71.6" fill="none" stroke="#cfcfcf" stroke-width="1"/>
<path d="M17.9 230.5H24.7L21.299999999999997 235.7Z" fill="#6fa4e4"/>
<path d="M33.8 238.5V229.20000000000002Q33.8 228.3 34.699999999999996 228.3H38.0L39.199999999999996 229.9H45.0V231.70000000000002H36.8L34.199999999999996 238.5Z" fill="#6fa4e4"/><path d="M37.4 232.5H47.699999999999996L45.199999999999996 238.5H34.699999999999996Z" fill="#6fa4e4"/>
<path d="M57.2 255.8Q57.2 254.8 58.2 254.8H61.400000000000006L62.800000000000004 256.6H69.0Q69.8 256.6 69.8 257.6V266.2H57.2Z" fill="#6fa4e4"/><path d="M57.2 258.7H69.8" stroke="#8fbaf0" stroke-width="0.8"/>
<path d="M36.2 285.6H43.0L39.6 290.8Z" fill="#6fa4e4"/>
<path d="M57.4 291.4V282.09999999999997Q57.4 281.2 58.3 281.2H61.6L62.8 282.8H68.6V284.59999999999997H60.4L57.8 291.4Z" fill="#6fa4e4"/><path d="M61.0 285.4H71.3L68.8 291.4H58.3Z" fill="#6fa4e4"/>
<path d="M76.8 304.6H82.0L84.9 307.5V314.2H76.8Z" fill="none" stroke="#6fa4e4" stroke-width="1.1" stroke-linejoin="round"/><path d="M81.8 304.8V307.7H84.7" fill="none" stroke="#6fa4e4" stroke-width="0.9"/><path d="M79.60000000000001 309.6H82.0V312.4H79.60000000000001Z" fill="none" stroke="#6fa4e4" stroke-width="0.9"/>
<path d="M76.8 325.20000000000005H82.0L84.9 328.1V334.8H76.8Z" fill="none" stroke="#6fa4e4" stroke-width="1.1" stroke-linejoin="round"/><path d="M81.8 325.40000000000003V328.3H84.7" fill="none" stroke="#6fa4e4" stroke-width="0.9"/><path d="M79.60000000000001 330.20000000000005H82.0V333.0H79.60000000000001Z" fill="none" stroke="#6fa4e4" stroke-width="0.9"/>
<path d="M76.8 346.0H82.0L84.9 348.9V355.59999999999997H76.8Z" fill="none" stroke="#6fa4e4" stroke-width="1.1" stroke-linejoin="round"/><path d="M81.8 346.2V349.09999999999997H84.7" fill="none" stroke="#6fa4e4" stroke-width="0.9"/><path d="M79.60000000000001 351.0H82.0V353.79999999999995H79.60000000000001Z" fill="none" stroke="#6fa4e4" stroke-width="0.9"/>
<path d="M76.8 366.8H82.0L84.9 369.7V376.4H76.8Z" fill="none" stroke="#6fa4e4" stroke-width="1.1" stroke-linejoin="round"/><path d="M81.8 367.0V369.9H84.7" fill="none" stroke="#6fa4e4" stroke-width="0.9"/><path d="M79.60000000000001 371.8H82.0V374.59999999999997H79.60000000000001Z" fill="none" stroke="#6fa4e4" stroke-width="0.9"/>
<path d="M57.1 391.6Q57.1 390.6 58.1 390.6H61.300000000000004L62.7 392.40000000000003H68.9Q69.7 392.40000000000003 69.7 393.40000000000003V402.0H57.1Z" fill="#6fa4e4"/><path d="M57.1 394.5H69.7" stroke="#8fbaf0" stroke-width="0.8"/>
</svg>
<span class="lb" style="left:54.2px;top:50px;width:51.9px;height:16.2px;font-size:12.5px"><span class="tt">测试工程</span></span>
<span class="lb" style="left:75.3px;top:76.8px;width:27px;height:16.2px;font-size:12.5px"><span class="tt">全局</span></span>
<span class="lb" style="left:75.3px;top:102.9px;width:14.5px;height:16.2px;font-size:12.5px"><span class="tt">档</span></span>
<div class="lt" style="left:91.6px;top:126.1px;font-size:12.6px">1-2</div>
<div class="lt" style="left:91.6px;top:146.7px;font-size:12.6px">1-2</div>
<div class="lt" style="left:91.6px;top:167.5px;font-size:12.6px">1-2</div>
<div class="lt" style="left:91.6px;top:188.3px;font-size:12.6px">1-2</div>
<span class="lb" style="left:75.2px;top:212.3px;width:27px;height:16.2px;font-size:12.5px"><span class="tt">报告</span></span>
</div>
<div id="view">
<svg class="abs" style="left:203px;top:253px" width="600" height="200" viewBox="410 430 600 200" shape-rendering="crispEdges">
<path d="M433.7 441.0L992.2 562.8L969.8 619.4L421.6 497.0Z" fill="#b87c58"/>
<path d="M433.7 441.0L561.2 468.8L558.5 478.0L552.6 491.8L515.4 517.9L421.6 497.0Z" fill="#00ffff"/>
<path d="M932.2 549.7L992.2 562.8L969.8 619.4L920.2 608.3L909.0 583.0L904.4 571.6Z" fill="#00ffff"/>
<path d="M562.2 470.6L566.6 471.6L569.4 492.0L574.4 512.0L579.4 528.6L575.2 527.8L570.8 514.0L565.4 500.0L562.4 488.0Z" fill="#2c5f8f"/><path d="M564.6 470.1h1.3v1.3h-1.3zM565.2 470.3h1.4v1.4h-1.4zM568.5 484.2h1.2v1.2h-1.2zM566.6 478.4h1.4v1.4h-1.4zM565.7 471.1h1.5v1.5h-1.5zM566.4 479.9h1.8v1.8h-1.8zM567.4 486.2h2.0v2.0h-2.0zM566.7 476.5h1.8v1.8h-1.8zM566.6 478.8h1.7v1.7h-1.7zM568.6 490.3h1.9v1.9h-1.9zM566.4 479.1h1.9v1.9h-1.9zM569.8 499.0h1.9v1.9h-1.9zM570.8 497.1h1.8v1.8h-1.8zM571.2 505.0h1.9v1.9h-1.9zM572.2 505.5h2.2v2.2h-2.2zM572.6 509.2h2.2v2.2h-2.2zM569.5 496.4h1.9v1.9h-1.9zM569.7 499.9h2.1v2.1h-2.1zM573.3 509.4h2.0v2.0h-2.0zM570.0 496.3h1.8v1.8h-1.8zM576.1 522.1h1.5v1.5h-1.5zM575.7 517.9h1.4v1.4h-1.4zM576.9 519.8h1.4v1.4h-1.4zM574.2 516.5h1.8v1.8h-1.8zM577.5 526.9h2.0v2.0h-2.0zM577.9 524.9h1.6v1.6h-1.6zM577.6 526.5h1.2v1.2h-1.2zM574.8 526.7h2.1v2.1h-2.1zM573.4 521.7h1.3v1.3h-1.3zM571.8 519.6h1.3v1.3h-1.3zM569.8 513.1h1.8v1.8h-1.8zM573.5 522.7h1.7v1.7h-1.7zM570.1 515.0h1.5v1.5h-1.5zM573.6 523.6h1.9v1.9h-1.9zM565.7 502.6h1.7v1.7h-1.7zM569.1 513.4h1.6v1.6h-1.6zM566.5 504.8h1.9v1.9h-1.9zM567.7 505.8h1.8v1.8h-1.8zM565.9 502.1h2.1v2.1h-2.1zM567.7 506.2h1.7v1.7h-1.7zM564.1 498.0h2.0v2.0h-2.0zM562.8 490.3h1.4v1.4h-1.4zM564.2 495.3h1.8v1.8h-1.8zM561.8 491.9h2.1v2.1h-2.1zM563.6 498.0h1.5v1.5h-1.5zM561.9 479.0h1.6v1.6h-1.6zM561.3 484.8h1.9v1.9h-1.9zM561.8 476.2h2.1v2.1h-2.1zM560.9 480.6h1.4v1.4h-1.4zM561.6 474.2h2.1v2.1h-2.1zM561.0 482.2h1.7v1.7h-1.7zM561.7 476.6h2.0v2.0h-2.0z" fill="#2c5f8f"/>
<path d="M607.6 478.8L611.4 479.8L616.6 489.6L621.4 497.6L625.8 508.0L631.6 522.0L636.6 533.0L641.8 544.6L634.4 543.2L629.6 535.6L618.6 533.2L610.4 524.0L605.4 513.6L600.2 503.2L597.2 495.4L603.6 490.6L607.6 494.0L611.6 489.4Z" fill="#2c5f8f"/><path d="M609.2 477.4h2.2v2.2h-2.2zM611.6 478.8h2.4v2.4h-2.4zM613.8 485.7h2.5v2.5h-2.5zM616.0 488.8h2.1v2.1h-2.1zM615.3 488.3h1.6v1.6h-1.6zM614.5 484.5h2.4v2.4h-2.4zM616.6 489.5h2.3v2.3h-2.3zM618.9 493.5h1.8v1.8h-1.8zM615.9 490.0h2.0v2.0h-2.0zM619.0 495.7h2.6v2.6h-2.6zM620.7 497.3h2.0v2.0h-2.0zM620.7 497.5h2.5v2.5h-2.5zM622.3 499.8h2.2v2.2h-2.2zM622.2 500.5h1.6v1.6h-1.6zM622.9 503.0h2.4v2.4h-2.4zM630.3 520.6h2.3v2.3h-2.3zM629.0 518.8h2.4v2.4h-2.4zM627.7 516.2h2.5v2.5h-2.5zM630.4 518.7h1.9v1.9h-1.9zM627.8 512.5h2.6v2.6h-2.6zM629.8 517.0h1.4v1.4h-1.4zM633.4 525.0h1.8v1.8h-1.8zM634.0 528.8h1.6v1.6h-1.6zM631.8 521.8h2.1v2.1h-2.1zM630.9 522.0h2.5v2.5h-2.5zM635.0 532.3h2.1v2.1h-2.1zM638.4 540.0h1.9v1.9h-1.9zM636.2 534.1h2.1v2.1h-2.1zM640.4 541.7h1.8v1.8h-1.8zM636.6 533.8h1.6v1.6h-1.6zM635.1 532.5h1.9v1.9h-1.9zM635.7 542.0h1.5v1.5h-1.5zM636.7 542.4h2.4v2.4h-2.4zM637.1 543.2h2.3v2.3h-2.3zM631.0 537.1h1.9v1.9h-1.9zM632.0 538.2h2.0v2.0h-2.0zM631.9 538.3h2.5v2.5h-2.5zM631.2 538.9h1.6v1.6h-1.6zM627.7 534.3h1.5v1.5h-1.5zM625.2 533.9h1.8v1.8h-1.8zM622.5 532.6h1.9v1.9h-1.9zM627.7 533.5h1.9v1.9h-1.9zM622.8 533.3h1.5v1.5h-1.5zM615.4 529.6h2.4v2.4h-2.4zM617.3 531.5h2.3v2.3h-2.3zM610.4 523.4h1.8v1.8h-1.8zM616.7 532.3h1.5v1.5h-1.5zM615.0 528.0h1.9v1.9h-1.9zM606.4 518.6h2.0v2.0h-2.0zM605.3 512.8h2.0v2.0h-2.0zM605.1 514.9h1.9v1.9h-1.9zM607.7 516.8h1.8v1.8h-1.8zM608.0 520.0h2.3v2.3h-2.3zM602.8 510.6h2.0v2.0h-2.0zM601.7 507.8h2.2v2.2h-2.2zM601.3 505.8h1.8v1.8h-1.8zM602.1 507.5h2.0v2.0h-2.0zM602.4 507.6h1.8v1.8h-1.8zM599.5 500.8h1.9v1.9h-1.9zM597.5 499.1h2.2v2.2h-2.2zM597.6 499.6h2.4v2.4h-2.4zM597.7 493.4h1.9v1.9h-1.9zM600.3 492.4h1.5v1.5h-1.5zM600.9 490.9h1.7v1.7h-1.7zM605.5 493.3h1.7v1.7h-1.7zM602.1 490.5h2.5v2.5h-2.5zM609.3 490.5h1.5v1.5h-1.5zM608.2 489.7h1.7v1.7h-1.7zM607.9 478.3h1.4v1.4h-1.4zM608.3 484.9h2.4v2.4h-2.4zM609.5 483.4h2.0v2.0h-2.0zM609.0 483.3h2.3v2.3h-2.3zM610.4 486.8h1.9v1.9h-1.9z" fill="#2c5f8f"/>
<path d="M848.4 538.2L856.0 535.6L863.2 534.6L850.6 546.6L837.2 559.0L826.6 569.0L819.6 577.4L812.6 584.0L806.0 582.6L800.2 579.4L811.0 570.0L822.4 560.4L834.6 550.2Z" fill="#2c5f8f"/><path d="M848.8 537.9h1.6v1.6h-1.6zM854.3 534.6h1.7v1.7h-1.7zM853.1 534.7h2.2v2.2h-2.2zM861.5 534.4h2.3v2.3h-2.3zM858.5 534.9h2.1v2.1h-2.1zM854.5 534.4h1.7v1.7h-1.7zM860.5 536.1h1.9v1.9h-1.9zM851.6 545.2h1.5v1.5h-1.5zM849.1 545.9h2.2v2.2h-2.2zM861.0 534.0h2.2v2.2h-2.2zM856.8 538.8h1.4v1.4h-1.4zM851.8 544.4h2.0v2.0h-2.0zM859.7 536.5h2.3v2.3h-2.3zM837.9 556.1h1.8v1.8h-1.8zM842.3 553.9h2.1v2.1h-2.1zM843.6 550.1h2.3v2.3h-2.3zM839.9 553.1h2.0v2.0h-2.0zM840.0 555.5h1.8v1.8h-1.8zM848.7 547.0h2.0v2.0h-2.0zM842.0 552.0h1.4v1.4h-1.4zM839.8 555.0h2.3v2.3h-2.3zM833.0 562.0h1.7v1.7h-1.7zM828.0 565.8h2.0v2.0h-2.0zM834.8 558.7h2.4v2.4h-2.4zM828.8 564.8h1.8v1.8h-1.8zM832.7 560.5h1.6v1.6h-1.6zM836.4 558.8h1.6v1.6h-1.6zM821.3 574.2h1.6v1.6h-1.6zM825.3 569.7h1.7v1.7h-1.7zM820.1 574.5h1.6v1.6h-1.6zM821.4 573.3h1.8v1.8h-1.8zM813.7 580.2h2.3v2.3h-2.3zM815.0 579.4h2.3v2.3h-2.3zM818.9 576.8h1.7v1.7h-1.7zM816.4 579.9h1.4v1.4h-1.4zM809.8 582.4h2.4v2.4h-2.4zM808.6 582.9h2.2v2.2h-2.2zM807.8 582.7h1.8v1.8h-1.8zM799.7 578.4h2.0v2.0h-2.0zM804.2 581.4h1.4v1.4h-1.4zM800.4 578.9h2.0v2.0h-2.0zM804.5 574.1h1.9v1.9h-1.9zM807.6 570.2h2.4v2.4h-2.4zM808.4 570.8h1.8v1.8h-1.8zM807.4 570.8h2.1v2.1h-2.1zM801.5 576.4h2.2v2.2h-2.2zM803.7 575.2h2.0v2.0h-2.0zM818.5 561.9h1.7v1.7h-1.7zM821.0 559.6h2.2v2.2h-2.2zM817.4 563.0h1.7v1.7h-1.7zM811.3 567.4h2.4v2.4h-2.4zM814.3 564.5h2.3v2.3h-2.3zM814.0 565.7h1.8v1.8h-1.8zM825.3 555.7h1.7v1.7h-1.7zM833.5 549.5h2.2v2.2h-2.2zM822.5 559.5h1.6v1.6h-1.6zM828.1 553.4h2.3v2.3h-2.3zM829.1 553.9h1.7v1.7h-1.7zM825.5 555.7h2.2v2.2h-2.2zM821.4 558.0h2.4v2.4h-2.4zM843.7 540.4h1.5v1.5h-1.5zM839.8 542.8h1.7v1.7h-1.7zM842.4 541.9h1.5v1.5h-1.5zM845.8 539.5h1.9v1.9h-1.9zM839.2 544.9h2.1v2.1h-2.1zM844.7 539.7h2.1v2.1h-2.1zM842.7 541.3h2.1v2.1h-2.1zM840.0 543.6h2.0v2.0h-2.0z" fill="#2c5f8f"/>
<path d="M547.8 466.4L561.6 469.8L562.8 476.0L561.4 484.6L558.8 488.6L554.6 487.6L551.6 482.0L549.4 475.0Z" fill="#00ff00"/><path d="M559.6 468.9h2.4v2.4h-2.4zM547.7 465.5h1.7v1.7h-1.7zM554.2 467.1h1.8v1.8h-1.8zM550.4 466.9h1.7v1.7h-1.7zM552.4 467.0h2.0v2.0h-2.0zM546.4 465.9h2.3v2.3h-2.3zM560.6 470.5h1.3v1.3h-1.3zM560.3 468.9h2.1v2.1h-2.1zM561.2 478.2h1.4v1.4h-1.4zM560.5 480.7h1.9v1.9h-1.9zM561.1 481.6h1.9v1.9h-1.9zM558.5 487.5h1.4v1.4h-1.4zM558.5 487.1h1.9v1.9h-1.9zM555.4 486.8h2.0v2.0h-2.0zM551.2 481.9h2.3v2.3h-2.3zM551.9 482.8h1.9v1.9h-1.9zM550.6 481.0h1.6v1.6h-1.6zM551.0 479.4h1.5v1.5h-1.5zM550.4 480.2h2.1v2.1h-2.1zM547.4 466.7h1.7v1.7h-1.7zM547.7 467.9h1.3v1.3h-1.3zM547.7 470.8h2.3v2.3h-2.3z" fill="#00ff00"/>
<path d="M559.6 515.0L566.8 513.4L572.6 514.2L574.2 520.6L578.4 525.0L579.2 531.6L570.0 530.0L560.6 527.8L557.0 523.0L558.2 518.4Z" fill="#00ff00"/><path d="M558.7 514.9h1.5v1.5h-1.5zM565.2 512.6h2.4v2.4h-2.4zM562.9 513.4h1.7v1.7h-1.7zM569.0 513.1h2.3v2.3h-2.3zM568.6 513.5h2.2v2.2h-2.2zM572.9 517.7h2.4v2.4h-2.4zM572.5 518.6h1.5v1.5h-1.5zM576.0 521.4h1.9v1.9h-1.9zM576.5 523.0h1.8v1.8h-1.8zM577.9 529.2h2.0v2.0h-2.0zM577.3 525.0h1.8v1.8h-1.8zM578.7 529.4h1.3v1.3h-1.3zM577.6 530.2h1.6v1.6h-1.6zM569.9 528.5h2.1v2.1h-2.1zM575.0 530.0h1.6v1.6h-1.6zM570.9 529.8h1.4v1.4h-1.4zM567.9 529.3h2.1v2.1h-2.1zM567.3 529.4h1.4v1.4h-1.4zM567.8 528.1h1.7v1.7h-1.7zM560.1 526.2h2.0v2.0h-2.0zM556.9 523.5h2.1v2.1h-2.1zM556.0 523.0h2.4v2.4h-2.4zM556.0 521.7h1.9v1.9h-1.9zM556.9 521.2h1.4v1.4h-1.4zM558.4 514.3h1.8v1.8h-1.8z" fill="#00ff00"/>
<path d="M580.2 473.2L592.0 475.6L605.8 479.0L608.4 486.0L611.6 492.4L606.0 495.4L601.4 491.2L597.2 495.2L592.6 492.2L587.6 486.4L584.0 479.6Z" fill="#00ff00"/><path d="M585.5 472.9h1.8v1.8h-1.8zM580.5 472.2h1.4v1.4h-1.4zM590.7 474.5h2.0v2.0h-2.0zM588.5 473.8h1.9v1.9h-1.9zM583.5 472.8h1.8v1.8h-1.8zM595.6 475.7h2.1v2.1h-2.1zM595.6 476.3h1.7v1.7h-1.7zM603.6 477.2h1.9v1.9h-1.9zM599.8 477.2h1.7v1.7h-1.7zM601.6 477.7h1.6v1.6h-1.6zM597.9 475.8h1.7v1.7h-1.7zM607.0 485.4h1.6v1.6h-1.6zM606.0 481.5h2.2v2.2h-2.2zM604.9 479.2h2.2v2.2h-2.2zM610.6 490.3h1.7v1.7h-1.7zM608.9 489.7h2.1v2.1h-2.1zM608.5 487.8h1.5v1.5h-1.5zM610.0 491.0h2.1v2.1h-2.1zM608.5 491.3h2.4v2.4h-2.4zM600.9 491.5h2.2v2.2h-2.2zM603.1 493.4h1.8v1.8h-1.8zM598.9 491.2h1.8v1.8h-1.8zM599.7 490.8h1.3v1.3h-1.3zM593.5 492.5h2.4v2.4h-2.4zM593.9 492.2h2.2v2.2h-2.2zM591.6 490.5h1.4v1.4h-1.4zM589.8 488.5h1.5v1.5h-1.5zM589.6 489.2h2.4v2.4h-2.4zM584.3 481.2h1.3v1.3h-1.3zM586.4 484.1h2.0v2.0h-2.0zM583.1 478.7h2.2v2.2h-2.2zM581.1 476.6h1.5v1.5h-1.5zM579.8 473.4h1.3v1.3h-1.3zM581.2 475.1h1.7v1.7h-1.7z" fill="#00ff00"/>
<path d="M607.2 528.8L612.8 525.4L620.6 527.4L627.4 530.8L633.4 527.0L637.6 532.6L640.4 537.0L643.2 541.0L642.0 545.4L631.6 543.2L622.2 541.0L613.2 539.0L607.0 536.4L605.6 532.2Z" fill="#00ff00"/><path d="M609.7 525.9h1.3v1.3h-1.3zM605.8 528.3h1.9v1.9h-1.9zM611.8 524.1h2.4v2.4h-2.4zM619.5 526.0h1.8v1.8h-1.8zM612.7 524.2h2.2v2.2h-2.2zM624.2 528.4h1.8v1.8h-1.8zM626.6 530.4h1.4v1.4h-1.4zM623.4 529.1h1.4v1.4h-1.4zM631.3 527.0h2.1v2.1h-2.1zM628.6 529.4h1.9v1.9h-1.9zM629.1 528.3h2.2v2.2h-2.2zM635.0 529.2h1.9v1.9h-1.9zM635.1 530.6h1.6v1.6h-1.6zM635.3 530.3h1.9v1.9h-1.9zM640.1 535.9h1.6v1.6h-1.6zM636.8 532.8h1.9v1.9h-1.9zM641.7 538.8h1.5v1.5h-1.5zM641.7 540.1h2.2v2.2h-2.2zM641.7 539.8h1.6v1.6h-1.6zM642.6 541.2h1.4v1.4h-1.4zM639.9 543.8h2.1v2.1h-2.1zM632.6 542.8h2.0v2.0h-2.0zM630.6 542.1h2.1v2.1h-2.1zM632.2 542.8h1.9v1.9h-1.9zM624.9 541.3h1.4v1.4h-1.4zM626.6 540.9h1.4v1.4h-1.4zM629.1 542.1h2.2v2.2h-2.2zM624.5 541.5h1.7v1.7h-1.7zM617.8 539.7h1.7v1.7h-1.7zM613.0 537.8h1.5v1.5h-1.5zM619.2 540.0h1.4v1.4h-1.4zM618.3 540.0h1.5v1.5h-1.5zM605.8 536.0h2.1v2.1h-2.1zM610.8 538.0h2.0v2.0h-2.0zM608.7 535.6h1.7v1.7h-1.7zM606.4 535.6h1.4v1.4h-1.4zM604.8 532.8h2.1v2.1h-2.1zM605.3 528.1h1.8v1.8h-1.8z" fill="#00ff00"/>
<path d="M848.6 533.4L852.4 532.2L856.8 533.6L857.0 537.6L853.6 539.6L849.6 539.2L848.2 536.4Z" fill="#00ff00"/><path d="M850.9 531.6h2.0v2.0h-2.0zM853.1 530.9h2.3v2.3h-2.3zM854.0 531.7h1.4v1.4h-1.4zM855.3 535.4h1.9v1.9h-1.9zM856.2 536.2h1.4v1.4h-1.4zM851.7 538.2h2.3v2.3h-2.3zM847.2 535.5h2.3v2.3h-2.3zM847.6 533.9h1.6v1.6h-1.6z" fill="#00ff00"/>
<path d="M864.0 535.6L871.0 537.4L868.4 541.4L865.6 545.0L862.6 549.6L856.4 549.8L851.0 549.0L854.6 544.0L859.6 539.6Z" fill="#00ff00"/><path d="M865.1 534.5h1.9v1.9h-1.9zM869.8 536.2h1.5v1.5h-1.5zM871.0 537.1h1.3v1.3h-1.3zM868.4 538.7h1.4v1.4h-1.4zM868.0 538.7h1.5v1.5h-1.5zM865.2 542.8h1.9v1.9h-1.9zM866.4 542.7h1.8v1.8h-1.8zM863.0 546.5h1.6v1.6h-1.6zM864.2 545.9h1.4v1.4h-1.4zM857.6 549.3h1.5v1.5h-1.5zM860.8 549.2h2.3v2.3h-2.3zM853.1 548.0h2.0v2.0h-2.0zM855.6 549.1h2.2v2.2h-2.2zM851.8 544.5h2.0v2.0h-2.0zM852.1 544.8h2.0v2.0h-2.0zM855.7 542.0h1.7v1.7h-1.7zM857.3 541.2h1.4v1.4h-1.4zM854.5 542.1h2.3v2.3h-2.3zM861.0 537.5h1.5v1.5h-1.5zM860.2 537.1h2.3v2.3h-2.3z" fill="#00ff00"/>
<path d="M844.4 552.4L850.8 552.8L852.6 556.4L853.6 560.6L854.6 565.6L853.4 569.6L849.6 568.6L846.4 569.4L843.8 571.6L843.4 575.8L839.6 575.6L836.8 572.4L838.6 569.6L834.4 568.4L831.4 565.6L835.4 562.4L839.6 559.2L842.4 555.6Z" fill="#00ff00"/><path d="M844.7 552.3h1.8v1.8h-1.8zM847.1 552.6h1.6v1.6h-1.6zM850.3 553.1h1.9v1.9h-1.9zM852.0 555.3h2.1v2.1h-2.1zM853.5 561.5h2.0v2.0h-2.0zM852.4 561.5h2.2v2.2h-2.2zM853.8 565.9h1.6v1.6h-1.6zM849.5 567.2h2.2v2.2h-2.2zM845.6 568.9h1.7v1.7h-1.7zM843.2 570.4h1.6v1.6h-1.6zM841.6 573.9h2.4v2.4h-2.4zM839.7 574.0h2.3v2.3h-2.3zM836.4 572.2h1.5v1.5h-1.5zM837.9 569.2h1.3v1.3h-1.3zM834.7 567.3h2.2v2.2h-2.2zM829.8 564.3h2.2v2.2h-2.2zM830.6 565.2h1.7v1.7h-1.7zM830.5 565.0h1.5v1.5h-1.5zM837.7 559.5h1.5v1.5h-1.5zM837.4 560.1h2.3v2.3h-2.3zM839.0 557.1h2.3v2.3h-2.3zM839.1 556.6h2.3v2.3h-2.3zM842.9 553.3h2.0v2.0h-2.0z" fill="#00ff00"/>
<path d="M811.4 566.6L816.4 566.2L818.0 569.6L816.4 572.0L812.4 571.6Z" fill="#00ff00"/><path d="M815.4 566.0h1.6v1.6h-1.6zM811.5 565.5h1.7v1.7h-1.7zM817.2 568.2h1.7v1.7h-1.7zM816.3 570.4h1.8v1.8h-1.8zM814.1 570.8h1.7v1.7h-1.7zM810.9 569.4h1.5v1.5h-1.5zM810.4 569.8h2.0v2.0h-2.0z" fill="#00ff00"/>
<path d="M815.0 574.4L820.4 573.8L821.4 577.6L818.4 580.2L815.0 579.4Z" fill="#00ff00"/><path d="M817.2 573.4h1.4v1.4h-1.4zM816.5 573.6h2.0v2.0h-2.0zM819.8 573.1h1.6v1.6h-1.6zM817.4 578.9h2.0v2.0h-2.0zM814.4 578.2h1.4v1.4h-1.4zM813.6 577.0h2.0v2.0h-2.0zM814.3 578.2h1.7v1.7h-1.7z" fill="#00ff00"/>
<path d="M808.4 580.4L813.6 580.0L814.6 583.6L810.4 584.6L807.8 583.0Z" fill="#00ff00"/><path d="M809.4 580.1h1.8v1.8h-1.8zM808.3 579.8h2.1v2.1h-2.1zM813.4 583.0h1.4v1.4h-1.4zM809.6 583.4h2.3v2.3h-2.3zM807.9 582.5h2.0v2.0h-2.0zM807.1 579.2h2.2v2.2h-2.2z" fill="#00ff00"/>
<path d="M795.8 579.4L800.2 579.6L800.6 581.8L796.6 581.4Z" fill="#00ff00"/><path d="M798.2 579.1h2.0v2.0h-2.0zM798.6 577.7h2.4v2.4h-2.4zM799.9 580.2h1.4v1.4h-1.4zM795.8 580.7h2.2v2.2h-2.2zM795.1 580.0h2.2v2.2h-2.2z" fill="#00ff00"/>
<path d="M564.9 484.5h3v3h-3zM567.2 495.4h2.4v2.4h-2.4zM570.0 505.0h2v2h-2zM612.1 498.9h3v3h-3zM609.7 506.9h3.4v3.4h-3.4zM615.3 512.9h2.6v2.6h-2.6zM620.2 519.2h2.4v2.4h-2.4zM605.4 502.6h2v2h-2zM618.3 496.3h2.6v2.6h-2.6zM831.3 551.3h3.4v3.4h-3.4zM824.5 558.9h3v3h-3zM817.6 563.4h2v2h-2zM820.2 550.8h2v2h-2zM803.7 574.9h2.2v2.2h-2.2zM828.8 555.6h1.6v1.6h-1.6zM448.8 456.8h2v2h-2z" fill="#00ff00"/>
<path d="M479.6 450.2L485.6 451.4L488.6 453.6L485.8 456.2L482.4 457.6L479.8 454.4Z" fill="#00ff00"/><path d="M478.0 449.2h1.6v1.6h-1.6zM484.3 450.3h1.8v1.8h-1.8zM486.2 452.5h2.0v2.0h-2.0zM487.5 452.5h2.2v2.2h-2.2zM483.5 454.8h2.0v2.0h-2.0zM481.5 455.2h2.6v2.6h-2.6zM478.8 451.0h2.1v2.1h-2.1z" fill="#00ff00"/>
<path d="M505.6 456.6L512.4 457.8L515.6 461.0L520.4 462.6L521.6 467.6L517.6 470.0L513.4 467.4L509.4 462.8L506.0 460.4Z" fill="#00ff00"/><path d="M505.3 455.4h2.5v2.5h-2.5zM507.2 456.6h2.1v2.1h-2.1zM509.3 455.9h1.7v1.7h-1.7zM512.5 458.1h1.9v1.9h-1.9zM514.2 460.3h2.0v2.0h-2.0zM518.7 460.5h1.8v1.8h-1.8zM516.3 460.4h1.9v1.9h-1.9zM519.9 461.9h1.7v1.7h-1.7zM519.3 465.3h2.1v2.1h-2.1zM519.2 467.4h1.6v1.6h-1.6zM521.3 466.9h2.2v2.2h-2.2zM513.6 467.3h2.5v2.5h-2.5zM512.4 467.2h2.5v2.5h-2.5zM509.8 463.7h2.4v2.4h-2.4zM510.8 464.6h1.6v1.6h-1.6zM507.2 461.7h1.8v1.8h-1.8zM504.8 454.9h1.8v1.8h-1.8z" fill="#00ff00"/>
<path d="M976.9 567.6L975.0 569.6L973.1 571.4L970.1 570.9L968.1 568.9L968.4 566.4L970.4 564.7L973.0 564.3L975.1 565.6Z" fill="#00ff00"/>
<path d="M970.4 571.0L969.9 572.6L968.4 573.4L966.5 573.6L965.9 571.8L965.5 570.1L966.6 568.6L968.4 568.6L969.7 569.6Z" fill="#00ff00"/>
<path d="M923.9 570.6L922.6 571.9L921.1 572.7L919.2 572.5L917.4 571.5L917.5 569.7L919.0 568.4L921.1 568.4L922.8 569.1Z" fill="#00ff00"/>
<path d="M957.8 591.4L956.1 593.1L953.1 594.4L949.5 593.5L946.0 592.5L945.8 590.3L948.1 588.2L953.4 587.6L957.9 589.0Z" fill="#00ff00"/>
<path d="M949.3 593.6L948.6 595.0L946.8 596.5L943.7 596.2L941.5 594.7L942.0 592.7L944.1 591.4L946.8 590.7L949.0 592.0Z" fill="#00ff00"/>
<path d="M932.5 586.6L930.3 587.7L928.3 589.1L924.7 588.8L923.7 587.2L924.2 586.0L925.2 584.8L928.1 584.8L930.2 585.5Z" fill="#00ff00"/>
<path d="M936.7 588.4L935.6 589.4L934.3 590.6L931.7 590.3L930.6 589.0L929.8 587.6L931.7 586.5L934.1 586.8L935.8 587.3Z" fill="#00ff00"/>
<path d="M953.1 600.0L951.3 601.7L948.7 602.9L945.6 602.2L942.9 601.0L944.3 599.3L945.6 597.8L948.7 597.2L951.7 598.2Z" fill="#00ff00"/>
<path d="M956.5 602.6L956.1 604.0L954.2 604.7L951.9 604.6L951.1 603.2L951.1 602.0L952.3 601.2L954.1 600.7L955.4 601.6Z" fill="#00ff00"/>
<path d="M971.4 609.6L970.6 612.1L968.6 614.3L965.8 613.2L963.9 611.1L963.6 608.0L966.2 606.6L968.4 605.9L971.4 606.4Z" fill="#00ff00"/>
<path d="M967.0 613.6L965.4 614.9L964.1 616.3L962.0 616.0L961.2 614.3L961.1 612.8L962.0 611.1L964.1 611.2L966.1 611.8Z" fill="#00ff00"/>
<path d="M973.3 604.8L973.1 606.6L971.5 606.9L970.0 607.0L969.5 605.5L968.7 603.8L970.1 602.8L971.5 602.7L972.6 603.5Z" fill="#00ff00"/>
<path d="M939.4 560.6L938.3 561.8L937.1 562.9L935.3 562.5L934.2 561.3L934.3 559.9L935.2 558.6L937.0 558.8L938.5 559.3Z" fill="#00ff00"/>
<path d="M932.4 562.6L931.8 563.6L930.9 564.1L929.7 564.2L929.2 563.1L929.2 562.1L929.9 561.3L930.9 560.8L931.7 561.7Z" fill="#00ff00"/>
<path d="M946.2 559.4L945.4 560.2L944.8 561.2L943.6 560.7L942.7 559.9L943.0 558.9L943.4 557.8L944.7 557.9L945.5 558.6Z" fill="#00ff00"/>
<path d="M960.5 565.0L960.3 566.5L958.5 567.3L956.7 566.7L955.4 565.7L955.2 564.2L956.9 563.5L958.5 563.0L960.3 563.5Z" fill="#00ff00"/>
<path d="M964.2 577.6L964.0 578.7L962.7 579.2L961.5 578.8L960.0 578.3L960.0 576.9L961.4 576.2L962.7 576.2L963.9 576.6Z" fill="#00ff00"/>
<path d="M941.5 575.6L941.3 576.7L940.3 577.4L939.1 577.2L938.1 576.3L938.0 574.9L939.0 573.8L940.4 573.5L941.5 574.3Z" fill="#00ff00"/>
<path d="M916.3 578.6L916.5 579.8L914.9 580.4L913.4 579.7L911.8 579.2L912.7 578.2L913.4 577.4L914.8 577.0L916.1 577.7Z" fill="#00ff00"/>
<path d="M921.6 583.6L920.9 584.5L919.9 585.5L918.3 584.9L917.7 584.1L917.6 583.1L918.5 582.5L919.8 582.1L920.8 582.8Z" fill="#00ff00"/>
<path d="M937.2 597.6L936.8 598.8L935.3 598.8L934.1 598.9L933.6 598.0L933.5 597.2L934.0 596.2L935.4 596.0L936.4 596.7Z" fill="#00ff00"/>
<path d="M943.8 606.4L943.6 607.8L942.1 608.7L940.2 608.4L939.7 607.0L939.8 605.8L940.3 604.5L941.9 604.8L943.1 605.4Z" fill="#00ff00"/>
<path d="M957.6 611.6L957.4 612.9L955.8 613.4L954.1 613.3L953.5 612.1L952.8 610.9L954.0 609.8L955.9 609.6L957.1 610.5Z" fill="#00ff00"/>
<path d="M978.8 569.6L978.0 570.8L977.0 571.9L975.5 571.6L975.1 570.1L974.4 568.8L975.4 567.5L976.9 567.8L978.1 568.3Z" fill="#00ff00"/>
<path d="M986.2 572.6L985.7 573.8L984.9 574.8L983.8 574.3L983.4 573.1L982.9 571.8L983.9 571.1L984.9 570.7L985.8 571.3Z" fill="#00ff00"/>
<path d="M981.5 565.6L980.9 566.4L979.9 566.9L978.7 566.8L978.3 566.0L978.2 565.2L978.8 564.6L979.9 564.2L980.9 564.7Z" fill="#00ff00"/>
<path d="M927.7 575.6L927.4 576.7L926.3 577.0L925.4 576.6L924.8 576.0L924.8 575.2L925.1 574.2L926.2 574.4L927.2 574.7Z" fill="#00ff00"/>
<path d="M950.0 583.6L949.7 584.5L948.7 585.1L947.8 584.5L946.7 584.1L947.0 583.1L947.5 582.2L948.6 582.5L949.7 582.7Z" fill="#00ff00"/>
<path d="M960.5 596.6L959.7 597.4L959.0 598.4L957.8 597.8L956.7 597.2L957.3 596.2L957.6 595.0L958.9 594.8L960.2 595.4Z" fill="#00ff00"/>
<path d="M841.3 533.1h1.0v1.0h-1.0zM769.1 561.5h1.1v1.1h-1.1zM795.7 536.4h1.1v1.1h-1.1zM814.0 569.6h1.5v1.5h-1.5zM763.0 553.5h1.2v1.2h-1.2zM844.5 567.8h1.3v1.3h-1.3zM660.8 550.4h1.5v1.5h-1.5zM676.3 548.6h1.4v1.4h-1.4zM659.0 504.9h1.0v1.0h-1.0zM598.9 518.7h1.3v1.3h-1.3zM758.3 571.5h1.4v1.4h-1.4zM836.1 534.1h1.3v1.3h-1.3zM833.6 551.9h1.4v1.4h-1.4zM712.1 556.3h1.4v1.4h-1.4zM904.5 597.3h1.3v1.3h-1.3zM840.1 563.1h1.5v1.5h-1.5zM885.6 584.6h1.2v1.2h-1.2zM567.4 499.3h1.2v1.2h-1.2zM714.9 524.1h1.0v1.0h-1.0zM701.6 508.4h1.5v1.5h-1.5zM649.1 517.9h1.3v1.3h-1.3zM586.9 497.8h1.4v1.4h-1.4zM617.0 483.8h1.1v1.1h-1.1zM691.6 503.1h1.2v1.2h-1.2zM887.8 562.7h1.1v1.1h-1.1zM709.7 548.2h1.0v1.0h-1.0zM582.2 510.4h1.5v1.5h-1.5zM777.6 575.2h1.1v1.1h-1.1zM615.9 534.1h1.3v1.3h-1.3zM700.1 538.2h1.3v1.3h-1.3zM873.7 582.1h1.2v1.2h-1.2zM578.1 506.9h1.3v1.3h-1.3zM686.1 538.8h1.2v1.2h-1.2zM692.5 515.1h1.1v1.1h-1.1zM854.8 549.1h1.1v1.1h-1.1zM834.7 544.9h1.4v1.4h-1.4zM684.2 541.2h1.5v1.5h-1.5zM629.0 492.1h1.2v1.2h-1.2zM676.8 507.3h1.5v1.5h-1.5zM900.1 594.7h1.1v1.1h-1.1zM900.7 545.7h1.1v1.1h-1.1zM888.7 560.1h1.3v1.3h-1.3zM584.7 488.9h1.0v1.0h-1.0zM725.0 513.5h1.2v1.2h-1.2zM681.2 538.5h1.4v1.4h-1.4zM640.6 539.7h1.3v1.3h-1.3zM581.3 475.4h1.3v1.3h-1.3zM725.4 529.6h1.5v1.5h-1.5zM678.1 537.8h1.0v1.0h-1.0zM871.0 546.7h1.3v1.3h-1.3zM714.6 512.0h1.1v1.1h-1.1zM784.5 554.7h1.5v1.5h-1.5zM725.5 508.9h1.1v1.1h-1.1zM853.4 543.1h1.1v1.1h-1.1zM676.6 543.3h1.1v1.1h-1.1zM819.4 555.5h1.2v1.2h-1.2zM718.5 519.3h1.1v1.1h-1.1zM738.5 551.1h1.0v1.0h-1.0zM863.7 536.3h1.5v1.5h-1.5zM729.1 564.4h1.1v1.1h-1.1zM625.3 490.1h1.0v1.0h-1.0zM673.1 542.1h1.4v1.4h-1.4zM727.8 532.8h1.0v1.0h-1.0zM623.5 513.3h1.1v1.1h-1.1zM623.5 494.2h1.1v1.1h-1.1zM873.6 538.7h1.2v1.2h-1.2zM803.4 533.9h1.3v1.3h-1.3zM636.9 502.3h1.4v1.4h-1.4zM875.0 589.3h1.5v1.5h-1.5zM652.2 511.0h1.5v1.5h-1.5zM867.1 552.0h1.1v1.1h-1.1zM596.4 518.9h1.3v1.3h-1.3zM627.6 492.9h1.1v1.1h-1.1zM627.5 511.3h1.4v1.4h-1.4zM569.1 524.6h1.4v1.4h-1.4zM629.2 489.4h1.2v1.2h-1.2zM683.3 526.1h1.3v1.3h-1.3zM843.3 542.7h1.4v1.4h-1.4zM850.1 583.3h1.4v1.4h-1.4zM599.2 489.4h1.2v1.2h-1.2zM676.9 533.4h1.3v1.3h-1.3zM738.4 566.2h1.1v1.1h-1.1zM692.7 538.2h1.2v1.2h-1.2zM738.0 526.8h1.2v1.2h-1.2zM905.0 565.9h1.1v1.1h-1.1zM587.3 484.7h1.2v1.2h-1.2zM805.9 572.8h1.1v1.1h-1.1zM599.6 493.7h1.3v1.3h-1.3zM712.1 522.2h1.4v1.4h-1.4zM705.2 547.5h1.5v1.5h-1.5zM619.8 492.5h1.1v1.1h-1.1zM755.4 545.9h1.3v1.3h-1.3zM832.3 587.1h1.2v1.2h-1.2zM744.9 526.0h1.0v1.0h-1.0zM763.5 531.6h1.3v1.3h-1.3zM887.0 574.0h1.3v1.3h-1.3zM650.2 538.8h1.4v1.4h-1.4zM797.8 576.5h1.3v1.3h-1.3zM688.2 497.0h1.5v1.5h-1.5zM651.4 529.4h1.3v1.3h-1.3zM572.8 477.6h1.4v1.4h-1.4zM847.0 576.2h1.1v1.1h-1.1zM667.5 538.2h1.4v1.4h-1.4zM652.5 498.0h1.4v1.4h-1.4zM892.3 580.8h1.1v1.1h-1.1zM857.6 589.4h1.5v1.5h-1.5zM668.2 502.4h1.1v1.1h-1.1zM620.8 484.8h1.4v1.4h-1.4zM921.7 554.5h1.0v1.0h-1.0zM665.7 504.0h1.3v1.3h-1.3zM597.6 502.9h1.0v1.0h-1.0zM723.9 562.8h1.2v1.2h-1.2zM780.8 567.2h1.2v1.2h-1.2zM694.6 497.9h1.2v1.2h-1.2zM789.1 554.4h1.2v1.2h-1.2zM854.7 546.6h1.2v1.2h-1.2zM614.5 483.8h1.3v1.3h-1.3zM815.0 542.7h1.3v1.3h-1.3zM881.0 541.8h1.5v1.5h-1.5zM700.8 513.0h1.3v1.3h-1.3z" fill="#452a1a"/>
<path d="M773.0 544.1h1.2v1.2h-1.2zM773.6 546.2h1.2v1.2h-1.2zM755.7 520.5h1.4v1.4h-1.4zM776.3 546.3h1.5v1.5h-1.5zM730.6 533.6h1.0v1.0h-1.0zM740.6 542.6h1.1v1.1h-1.1zM770.0 533.5h1.4v1.4h-1.4zM780.1 552.3h1.5v1.5h-1.5zM790.0 537.1h1.4v1.4h-1.4zM744.3 517.4h1.2v1.2h-1.2zM758.4 527.5h1.2v1.2h-1.2zM744.9 518.0h1.1v1.1h-1.1zM733.5 516.0h1.4v1.4h-1.4zM780.5 554.9h1.0v1.0h-1.0z" fill="#452a1a"/>
<path d="M869.0 547.8h1.4v1.4h-1.4zM887.4 560.1h1.2v1.2h-1.2zM887.9 545.2h1.5v1.5h-1.5zM860.9 546.9h1.1v1.1h-1.1zM867.1 543.2h1.0v1.0h-1.0zM879.3 550.7h1.4v1.4h-1.4zM865.3 543.4h1.4v1.4h-1.4zM873.4 552.6h1.5v1.5h-1.5zM887.3 546.5h1.1v1.1h-1.1zM898.5 546.9h1.4v1.4h-1.4zM861.0 544.9h1.1v1.1h-1.1zM878.8 548.0h1.0v1.0h-1.0zM886.2 540.2h1.4v1.4h-1.4zM886.6 546.6h1.2v1.2h-1.2z" fill="#452a1a"/>
<path d="M471.7 503.8h1.0v1.0h-1.0zM537.0 484.1h1.3v1.3h-1.3zM466.7 455.0h1.3v1.3h-1.3zM489.5 476.7h1.1v1.1h-1.1zM509.6 508.2h1.2v1.2h-1.2zM459.6 495.9h1.2v1.2h-1.2zM470.6 492.6h1.4v1.4h-1.4zM432.8 458.5h1.0v1.0h-1.0zM478.6 459.7h1.1v1.1h-1.1zM484.8 503.2h1.2v1.2h-1.2zM497.6 512.4h1.4v1.4h-1.4zM433.1 464.5h1.4v1.4h-1.4zM464.7 496.2h1.4v1.4h-1.4zM528.3 493.5h1.4v1.4h-1.4zM453.6 487.2h1.4v1.4h-1.4zM475.8 487.7h1.3v1.3h-1.3z" fill="#145058"/>
<path d="M445.4 491.4h1.0v1.0h-1.0zM438.6 487.1h1.4v1.4h-1.4zM447.7 480.3h1.3v1.3h-1.3zM467.2 498.4h1.2v1.2h-1.2zM443.3 481.7h1.2v1.2h-1.2zM434.2 495.7h1.3v1.3h-1.3zM463.8 479.1h1.2v1.2h-1.2zM460.5 490.0h1.0v1.0h-1.0zM434.5 489.0h1.2v1.2h-1.2zM452.7 481.9h1.4v1.4h-1.4zM457.8 485.4h1.5v1.5h-1.5zM441.3 479.4h1.4v1.4h-1.4zM446.1 485.1h1.3v1.3h-1.3zM464.6 486.8h1.2v1.2h-1.2zM462.8 488.3h1.3v1.3h-1.3zM475.1 484.1h1.4v1.4h-1.4zM443.6 491.8h1.1v1.1h-1.1zM444.9 488.6h1.4v1.4h-1.4zM467.8 484.1h1.4v1.4h-1.4zM461.9 481.7h1.3v1.3h-1.3zM431.1 487.1h1.3v1.3h-1.3zM457.8 494.0h1.4v1.4h-1.4z" fill="#0e3c44"/>
<path d="M547.3 493.3h1.3v1.3h-1.3zM538.1 464.5h1.4v1.4h-1.4zM539.1 477.7h1.4v1.4h-1.4zM533.2 494.0h1.0v1.0h-1.0zM543.9 470.4h1.3v1.3h-1.3zM528.2 484.8h1.2v1.2h-1.2zM534.0 484.6h1.2v1.2h-1.2zM552.1 488.6h1.3v1.3h-1.3zM547.7 469.7h1.3v1.3h-1.3zM542.5 468.5h1.2v1.2h-1.2zM528.6 487.7h1.5v1.5h-1.5zM533.1 474.1h1.5v1.5h-1.5zM529.4 475.0h1.1v1.1h-1.1zM528.8 494.1h1.3v1.3h-1.3zM550.5 483.7h1.3v1.3h-1.3zM531.7 463.5h1.1v1.1h-1.1zM538.2 495.4h1.1v1.1h-1.1zM532.9 484.0h1.2v1.2h-1.2zM532.9 474.4h1.1v1.1h-1.1zM558.4 474.0h1.5v1.5h-1.5zM545.5 488.9h1.3v1.3h-1.3zM540.0 474.0h1.4v1.4h-1.4z" fill="#104048"/>
<path d="M490.8 499.0h1.2v1.2h-1.2zM504.3 508.7h1.1v1.1h-1.1zM494.4 510.6h1.5v1.5h-1.5zM517.3 500.2h1.5v1.5h-1.5zM485.0 502.5h1.3v1.3h-1.3zM489.3 511.3h1.2v1.2h-1.2zM501.1 508.3h1.2v1.2h-1.2zM519.6 510.2h1.2v1.2h-1.2zM484.7 508.7h1.5v1.5h-1.5zM497.3 510.1h1.4v1.4h-1.4zM501.9 503.6h1.4v1.4h-1.4zM515.6 502.1h1.3v1.3h-1.3zM500.6 500.5h1.0v1.0h-1.0zM498.2 511.0h1.2v1.2h-1.2zM517.8 510.6h1.1v1.1h-1.1zM482.5 506.7h1.6v1.6h-1.6zM510.5 500.5h1.6v1.6h-1.6zM498.0 505.7h1.7v1.7h-1.7zM509.4 508.4h1.6v1.6h-1.6zM510.7 515.1h1.4v1.4h-1.4zM504.8 504.8h1.2v1.2h-1.2zM515.5 510.1h1.3v1.3h-1.3zM511.3 501.8h1.6v1.6h-1.6zM506.0 499.7h1.6v1.6h-1.6zM490.1 499.3h1.1v1.1h-1.1zM504.3 499.2h1.6v1.6h-1.6zM487.7 503.7h1.6v1.6h-1.6zM508.9 503.1h1.6v1.6h-1.6zM491.5 502.0h1.3v1.3h-1.3zM493.6 503.9h1.4v1.4h-1.4zM511.7 500.7h1.3v1.3h-1.3zM512.2 502.1h1.7v1.7h-1.7zM487.8 505.8h1.3v1.3h-1.3zM518.9 500.0h1.6v1.6h-1.6z" fill="#04181c"/>
<path d="M947.3 611.2h1.0v1.0h-1.0zM927.1 554.7h1.3v1.3h-1.3zM958.3 579.4h1.4v1.4h-1.4zM952.3 573.8h1.2v1.2h-1.2zM936.5 565.7h1.4v1.4h-1.4zM939.0 568.5h1.0v1.0h-1.0zM928.9 581.9h1.2v1.2h-1.2zM943.9 572.3h1.5v1.5h-1.5zM947.4 609.3h1.3v1.3h-1.3zM924.2 564.4h1.3v1.3h-1.3zM910.0 574.2h1.4v1.4h-1.4zM922.7 570.0h1.0v1.0h-1.0zM916.6 568.9h1.4v1.4h-1.4zM975.7 603.7h1.4v1.4h-1.4zM947.3 599.2h1.1v1.1h-1.1zM941.5 554.8h1.2v1.2h-1.2zM976.4 595.8h1.1v1.1h-1.1zM945.4 598.0h1.3v1.3h-1.3zM928.9 558.4h1.2v1.2h-1.2zM977.1 570.8h1.3v1.3h-1.3zM959.2 607.2h1.5v1.5h-1.5zM936.0 591.9h1.1v1.1h-1.1zM926.6 582.0h1.1v1.1h-1.1zM954.3 565.5h1.5v1.5h-1.5zM914.6 577.4h1.4v1.4h-1.4zM928.8 571.4h1.5v1.5h-1.5zM908.6 575.1h1.0v1.0h-1.0zM964.2 611.1h1.0v1.0h-1.0zM945.9 558.2h1.5v1.5h-1.5zM949.1 567.7h1.2v1.2h-1.2zM913.4 571.8h1.2v1.2h-1.2zM965.7 590.7h1.1v1.1h-1.1zM947.6 595.0h1.1v1.1h-1.1zM971.4 559.7h1.2v1.2h-1.2zM927.0 554.8h1.5v1.5h-1.5zM980.2 590.1h1.2v1.2h-1.2zM926.5 567.2h1.5v1.5h-1.5zM970.4 597.9h1.3v1.3h-1.3zM946.9 587.9h1.0v1.0h-1.0zM959.3 555.8h1.1v1.1h-1.1zM952.1 577.4h1.1v1.1h-1.1zM963.7 611.9h1.1v1.1h-1.1zM960.6 571.2h1.2v1.2h-1.2zM932.8 576.4h1.4v1.4h-1.4zM946.5 588.7h1.2v1.2h-1.2zM957.9 602.3h1.3v1.3h-1.3zM961.8 588.0h1.2v1.2h-1.2zM958.4 606.7h1.0v1.0h-1.0zM963.7 609.4h1.2v1.2h-1.2zM975.2 566.2h1.5v1.5h-1.5zM925.4 573.4h1.1v1.1h-1.1zM961.2 576.8h1.1v1.1h-1.1zM931.6 592.2h1.1v1.1h-1.1zM975.1 574.4h1.1v1.1h-1.1zM942.8 561.0h1.2v1.2h-1.2zM949.9 587.9h1.2v1.2h-1.2zM948.1 602.5h1.4v1.4h-1.4zM929.6 607.2h1.5v1.5h-1.5zM964.0 579.1h1.4v1.4h-1.4zM965.0 614.2h1.4v1.4h-1.4zM973.2 597.3h1.4v1.4h-1.4zM925.4 595.0h1.2v1.2h-1.2zM911.7 574.4h1.2v1.2h-1.2zM981.2 583.2h1.1v1.1h-1.1zM954.0 585.6h1.1v1.1h-1.1zM951.3 603.2h1.1v1.1h-1.1zM916.3 581.1h1.5v1.5h-1.5zM918.9 584.0h1.1v1.1h-1.1zM957.8 590.8h1.4v1.4h-1.4zM938.3 599.7h1.1v1.1h-1.1zM933.5 567.2h1.2v1.2h-1.2zM979.4 572.0h1.1v1.1h-1.1zM925.8 566.4h1.3v1.3h-1.3zM963.5 574.8h1.2v1.2h-1.2zM975.5 567.9h1.3v1.3h-1.3zM929.5 554.6h1.5v1.5h-1.5zM942.0 564.7h1.4v1.4h-1.4zM954.3 612.5h1.2v1.2h-1.2zM973.7 578.6h1.3v1.3h-1.3zM959.6 616.9h1.4v1.4h-1.4zM927.2 606.3h1.5v1.5h-1.5zM928.2 576.6h1.4v1.4h-1.4zM916.7 575.7h1.0v1.0h-1.0zM964.6 575.3h1.3v1.3h-1.3zM933.2 588.9h1.0v1.0h-1.0zM961.9 559.8h1.1v1.1h-1.1zM951.6 582.6h1.4v1.4h-1.4zM920.9 570.8h1.2v1.2h-1.2zM916.3 568.9h1.5v1.5h-1.5zM933.4 567.1h1.2v1.2h-1.2zM923.6 561.1h1.5v1.5h-1.5zM975.8 585.8h1.1v1.1h-1.1zM914.7 589.6h1.3v1.3h-1.3zM935.6 555.6h1.4v1.4h-1.4zM920.6 566.4h1.3v1.3h-1.3zM943.3 557.9h1.4v1.4h-1.4zM965.3 580.2h1.1v1.1h-1.1zM962.7 593.5h1.3v1.3h-1.3zM976.7 599.1h1.1v1.1h-1.1zM963.6 569.2h1.1v1.1h-1.1zM965.6 588.5h1.4v1.4h-1.4zM939.0 579.6h1.4v1.4h-1.4zM905.1 573.1h1.0v1.0h-1.0zM933.7 587.7h1.4v1.4h-1.4zM975.7 570.0h1.0v1.0h-1.0zM948.6 606.4h1.5v1.5h-1.5zM949.6 561.7h1.5v1.5h-1.5zM940.1 580.9h1.2v1.2h-1.2zM972.3 589.9h1.0v1.0h-1.0zM935.7 573.8h1.5v1.5h-1.5z" fill="#0e3c48"/>
<path d="M928.4 589.0h1.4v1.4h-1.4zM953.7 614.3h1.0v1.0h-1.0zM921.7 608.3h1.2v1.2h-1.2zM956.3 564.6h1.2v1.2h-1.2zM908.8 572.2h1.4v1.4h-1.4zM961.2 581.6h1.1v1.1h-1.1zM950.8 611.4h1.0v1.0h-1.0zM924.5 607.2h1.2v1.2h-1.2zM974.7 580.9h1.2v1.2h-1.2zM920.2 562.2h1.0v1.0h-1.0zM926.5 606.7h1.1v1.1h-1.1zM955.1 593.3h1.5v1.5h-1.5zM949.1 554.7h1.2v1.2h-1.2zM947.8 589.9h1.2v1.2h-1.2zM973.3 564.5h1.0v1.0h-1.0zM949.3 605.1h1.5v1.5h-1.5zM921.7 578.3h1.2v1.2h-1.2zM916.8 579.7h1.0v1.0h-1.0zM952.7 575.5h1.3v1.3h-1.3zM962.5 569.5h1.3v1.3h-1.3zM960.0 612.1h1.1v1.1h-1.1zM941.9 554.7h1.3v1.3h-1.3zM920.7 568.4h1.1v1.1h-1.1zM928.4 569.5h1.1v1.1h-1.1zM935.5 587.9h1.1v1.1h-1.1zM942.7 600.2h1.2v1.2h-1.2zM920.3 562.1h1.3v1.3h-1.3zM979.9 589.2h1.5v1.5h-1.5zM947.4 575.8h1.1v1.1h-1.1zM959.0 604.6h1.3v1.3h-1.3zM929.0 594.7h1.2v1.2h-1.2zM908.9 568.1h1.5v1.5h-1.5zM913.9 574.6h1.2v1.2h-1.2zM932.9 581.5h1.4v1.4h-1.4zM909.8 569.6h1.2v1.2h-1.2zM938.6 591.9h1.5v1.5h-1.5zM972.0 604.9h1.1v1.1h-1.1zM926.7 596.8h1.3v1.3h-1.3zM969.4 600.1h1.1v1.1h-1.1zM964.5 586.2h1.4v1.4h-1.4zM960.9 568.8h1.3v1.3h-1.3zM934.8 607.2h1.0v1.0h-1.0zM978.5 567.7h1.2v1.2h-1.2zM950.0 555.5h1.4v1.4h-1.4zM937.7 582.0h1.3v1.3h-1.3zM984.1 581.3h1.5v1.5h-1.5zM952.0 612.5h1.3v1.3h-1.3zM983.6 576.1h1.3v1.3h-1.3zM930.5 555.8h1.4v1.4h-1.4zM962.4 585.8h1.3v1.3h-1.3z" fill="#1660b0"/>
<path d="M839 576h2.6v2h-2.6zM845 569.2h2.8v1.6h-2.8zM851 570.2h2.2v1.8h-2.2zM512.6 456h2.6v2h-2.6zM489 505.6l4.6-2.4l.8 1.2l-4.6 2.4zM470 491.6l2.4 3.6l-1.2.6l-2.4-3.6z" fill="#000"/>
<g shape-rendering="auto" fill="none" stroke="#ff5656"><path d="M688.2 497.6L710.1 560.3M737 507.6L767.8 574M841.1 530.2L786 578.4" stroke-width="1"/><path d="M775.9 516.4L805.4 582.8" stroke-width="1.6"/><path d="M815.4 535.2L800.4 549.6M792 560L772 577" stroke-width="0.7" stroke-opacity="0.6"/></g>
<g fill="none"><path d="M445.7 469.6L986 580.3" stroke="#a844f4" stroke-width="1.3"/><path d="M445.7 466.2L988 579.9" stroke="#ff1cf0" stroke-width="1.6"/><path d="M446.7 475.3L984.3 589.5" stroke="#ff1cf0" stroke-width="1.6"/><path d="M448.6 481.3L976.6 601.7" stroke="#a448f8" stroke-width="1.6"/><path d="M448.6 480.6L560 506" stroke="#ff1cf0" stroke-width="1.4"/><path d="M560 505.4L976.6 600.8" stroke="#ff1cf0" stroke-width="0.7"/><path d="M434.4 477.2L424 487M435.2 483.8L423 495.2" stroke="#ff1cf0" stroke-width="1.4"/></g>
<path d="M436.6 461.4L440.6 460.6L441.6 465.2L446.4 466.4L447.0 471.6L445.8 476.6L449.6 477.6L449.0 481.0L443.6 480.6L441.2 483.6L436.0 483.4L436.6 479.0L432.2 478.4L431.0 473.4L433.6 469.0L431.6 466.8L435.6 465.4Z" fill="#3a36e0"/>
<path d="M428 474L433 470M429.6 480.4L434.6 476" stroke="#3a36e0" stroke-width="1.4"/>
<path d="M444.2 458V471.6M440.8 460L444.2 458.2" stroke="#28e020" stroke-width="1.9" fill="none"/>
<path d="M979.8 576.4L982.2 577.4L980.0 585.0L977.6 590.6L975.6 597.4L973.4 602.4L971.0 601.6L972.4 595.0L968.6 592.4L970.6 588.6L974.8 588.6L976.8 582.6Z" fill="#3a36e0"/>
<path d="M966.6 598.4L975.4 600.8" stroke="#3a36e0" stroke-width="1.6"/>
<path d="M976.6 578C977.6 575 982.4 574.6 983.6 577.6C984.6 580.6 981.4 583.6 976.4 588.6H986" fill="none" stroke="#ff1cf0" stroke-width="1.8"/>
</svg>
<svg class="abs" style="left:198px;top:528px" width="62" height="60" viewBox="405 705 62 60"><path d="M415 720.6V753" stroke="#00e000" stroke-width="2.2"/><path d="M415 713L418.4 721.4H411.6Z" fill="#00e000"/><path d="M421 755.5H448" stroke="#f00000" stroke-width="3.2"/><path d="M453.4 755.5L447 752.4V758.6Z" fill="#f00000"/><rect x="411.6" y="753.2" width="4.4" height="5" fill="#000088"/><g font-family="Liberation Sans, sans-serif" font-weight="bold" font-style="italic" font-size="9.6" fill="#fff"><text x="417.4" y="716.8">Y</text><text x="416.6" y="758.6">Z</text><text x="452.2" y="758.6">X</text></g></svg>
</div>
<div id="right">
<div class="abs" style="left:74px;top:1.5px;width:290.5px;height:65px;background:#828282;border-bottom:1px solid #5e5e5e;border-right:1px solid #6a6a6a;border-top:1px solid #7a7a7a"></div>
<svg class="abs" style="left:0;top:0" width="366" height="110" viewBox="1300 177 366 110">
<circle cx="1336" cy="201.6" r="13.3" fill="#3e9fee"/><circle cx="1333" cy="205.4" r="1.7" fill="none" stroke="#fff" stroke-width="1.1"/><path d="M1334.3 204.1L1342.2 196.3" stroke="#fff" stroke-width="1.3" stroke-linecap="round"/><path d="M1335.6 199.4L1336 203.4L1340 203.6Z" fill="#fff"/>
<circle cx="1408" cy="201.6" r="13.3" fill="#f9525c"/><path d="M1402 202.5L1406.3 206.3L1414 196.8" fill="none" stroke="#fff" stroke-width="2.3" stroke-linecap="square" stroke-linejoin="miter"/>
<circle cx="1479.4" cy="201.6" r="13.3" fill="#f5b342"/><path d="M1475.6 197.4V208" stroke="#fff" stroke-width="1.6"/><path d="M1476.2 197.8C1478 196.8 1480 198.6 1482 198.4C1483.4 198.2 1484.4 197.6 1485.4 197.6L1483.6 200.9L1485.4 204.2C1484.2 204.2 1483.2 204.9 1481.8 205C1480 205.1 1478.2 203.6 1476.2 204.4Z" fill="#fff"/>
<circle cx="1551.5" cy="201.6" r="13.3" fill="#8fd45e"/><path d="M1546.9 196.7H1553.2L1556.6 200V206.8H1546.9Z" fill="none" stroke="#fff" stroke-width="1.3" stroke-linejoin="round"/><path d="M1553 196.9V200.2H1556.4" fill="none" stroke="#fff" stroke-width="1"/><path d="M1548.6 200.4H1552M1548.6 202.4H1555M1548.6 204.4H1555" stroke="#fff" stroke-width="1"/>
<circle cx="1622.7" cy="201.6" r="13.3" fill="#c08a3e"/><circle cx="1622.7" cy="200.8" r="3.5" fill="none" stroke="#fff" stroke-width="1.2"/><path d="M1620.9 205.9H1624.5M1621.2 207.5H1624.2M1621.8 209H1623.6" stroke="#f4e8d4" stroke-width="1"/><path d="M1622.7 193.4V195.2M1617.4 195.6L1618.6 196.8M1628 195.6L1626.8 196.8M1615.4 200.8H1617M1628.4 200.8H1630" stroke="#fff" stroke-width="1.2" stroke-linecap="round"/>
<rect x="1305" y="250.4" width="355.4" height="28.6" fill="#727274"/>
<rect x="1617.9" y="260" width="10.8" height="8.4" fill="none" stroke="#dcdcdc" stroke-width="1.1"/><rect x="1617.4" y="258.6" width="11.8" height="2.2" fill="#dcdcdc"/>
<path d="M1641.4 259.6L1651.2 269.4M1651.2 259.6L1641.4 269.4" stroke="#f0f0f0" stroke-width="1.3"/>
</svg>
<span class="lb" style="left:19.2px;top:44.8px;width:39.4px;height:16.2px;font-size:12.5px"><span class="tt" style="color:#b6b6b6">点信息</span></span>
<span class="lb" style="left:82.4px;top:44.8px;width:51.9px;height:16.2px;font-size:12.5px"><span class="tt">已选数据</span></span>
<span class="lb" style="left:155.4px;top:44.8px;width:51.9px;height:16.2px;font-size:12.5px"><span class="tt">标记塔杆</span></span>
<span class="lb" style="left:232.2px;top:44.8px;width:39.4px;height:16.2px;font-size:12.5px"><span class="tt">档属性</span></span>
<span class="lb" style="left:296.4px;top:44.8px;width:51.9px;height:16.2px;font-size:12.5px"><span class="tt">智能影响</span></span>
<span class="lb" style="left:15px;top:80.1px;width:39.4px;height:16.2px;font-size:12.5px"><span class="tt">点信息</span></span>
<div class="abs" style="left:54px;top:128.8px;width:276px;height:22.8px;background:#848484;border:1px solid #7a7a7a"></div>
<div class="abs" style="left:54px;top:181.0px;width:276px;height:22.8px;background:#848484;border:1px solid #7a7a7a"></div>
<div class="abs" style="left:54px;top:233.0px;width:276px;height:23.2px;background:#848484;border:1px solid #7a7a7a"></div>
<div class="abs" style="left:54px;top:285.2px;width:276px;height:22.8px;background:#848484;border:1px solid #7a7a7a"></div>
<div class="lt" style="left:31.40000000000009px;width:12px;text-align:center;top:133.4px;font-size:12.5px">X</div>
<div class="lt" style="left:31.40000000000009px;width:12px;text-align:center;top:185.6px;font-size:12.5px">Y</div>
<div class="lt" style="left:31.40000000000009px;width:12px;text-align:center;top:237.8px;font-size:12.5px">Z</div>
<span class="lb" style="left:16.6px;top:288.9px;width:27px;height:16.2px;font-size:12.5px"><span class="tt">类别</span></span>
</div>
<div id="status">
<svg class="abs" style="left:0;top:0" width="600" height="35" viewBox="0 922 600 35"><circle cx="21.6" cy="939.2" r="3.9" fill="#d88cb0" fill-opacity="0.5"/><circle cx="21.6" cy="939.2" r="2.3" fill="#ffb4d8"/><path d="M244.9 931.6V946.6M374.5 931.6V946.6M470 931.6V946.6" stroke="#cfcfcf" stroke-width="1.1"/></svg>
<span class="lb" style="left:31.6px;top:10.8px;width:200.6px;height:14.9px;font-size:11.4px"><span class="tt" style="transform:scaleX(0.9525)">坐标：667669.1384100900.2861092.210</span></span>
<span class="lb" style="left:257.4px;top:10.8px;width:102.2px;height:14.9px;font-size:11.4px"><span class="tt" style="transform:scaleX(0.936)">0点正显示/0点已加载</span></span>
<span class="lb" style="left:387.2px;top:10.8px;width:67px;height:14.9px;font-size:11.4px"><span class="tt" style="transform:scaleX(0.959)">比例尺：1 : 1</span></span>
<span class="lb" style="left:483.3px;top:10.8px;width:44.6px;height:14.9px;font-size:11.4px"><span class="tt" style="transform:scaleX(0.935)">单位：米</span></span>
<span class="lb" style="left:1419.2px;top:11px;width:63.6px;height:14.2px;font-size:10.9px"><span class="tt" style="font-weight:bold">Copyright ©</span></span>
<span class="lb" style="left:1484.4px;top:10.8px;width:159.6px;height:14.8px;font-size:11.4px"><span class="tt" style="font-weight:bold;transform:scaleX(0.9216)">南方电网科学研究院有限责任公司</span></span>
</div>
</div>
</body>
</html>
